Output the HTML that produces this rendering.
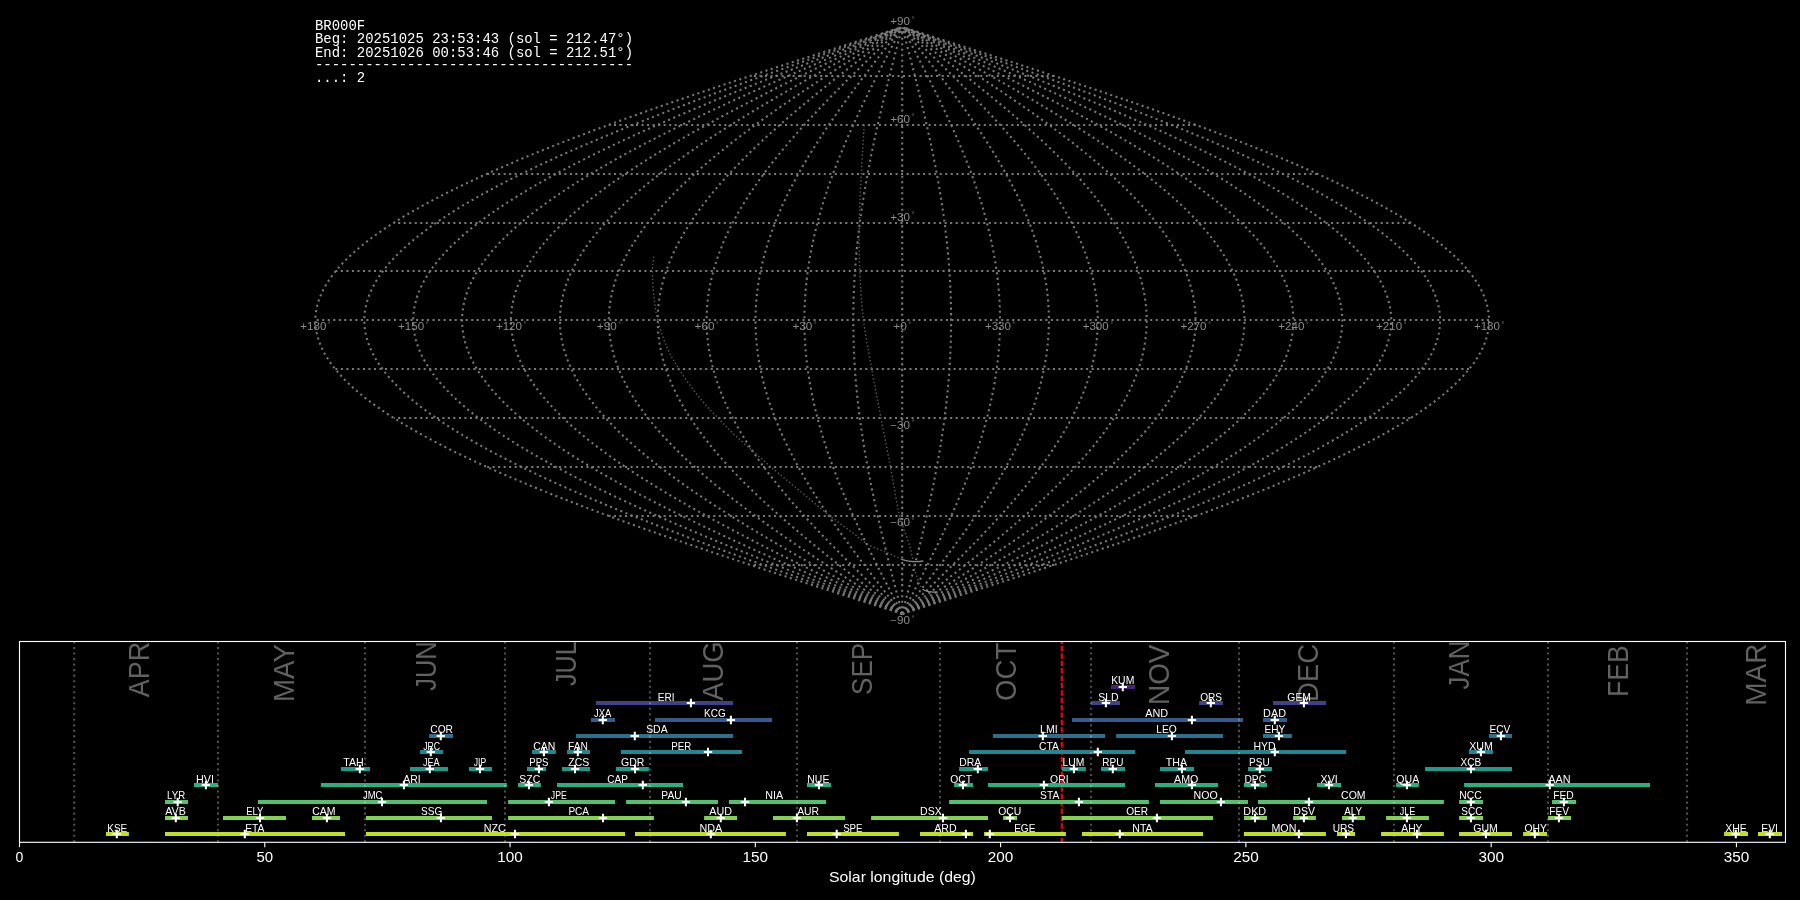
<!DOCTYPE html><html><head><meta charset="utf-8"><title>BR000F</title><style>html,body{margin:0;padding:0;background:#000;width:1800px;height:900px;overflow:hidden}svg{display:block;will-change:transform}</style></head><body>
<svg width="1800" height="900" viewBox="0 0 1800 900">
<rect width="1800" height="900" fill="#000"/>
<g fill="none" stroke="#787878" stroke-width="2.08" stroke-dasharray="2.08 3.44">
<polyline points="902.2,613.8 912.44,610.54 922.68,607.28 932.91,604.02 943.13,600.76 953.34,597.5 963.54,594.24 973.71,590.98 983.87,587.72 994,584.46 1004.1,581.2 1014.17,577.94 1024.2,574.68 1034.2,571.42 1044.16,568.16 1054.08,564.9 1063.94,561.64 1073.76,558.38 1083.53,555.12 1093.24,551.86 1102.9,548.6 1112.49,545.34 1122.02,542.08 1131.48,538.82 1140.87,535.56 1150.19,532.3 1159.44,529.04 1168.6,525.78 1177.69,522.52 1186.69,519.26 1195.6,516 1204.42,512.74 1213.16,509.48 1221.79,506.22 1230.33,502.96 1238.77,499.7 1247.11,496.44 1255.35,493.18 1263.47,489.92 1271.49,486.66 1279.39,483.4 1287.18,480.14 1294.85,476.88 1302.4,473.62 1309.83,470.36 1317.13,467.1 1324.31,463.84 1331.36,460.58 1338.28,457.32 1345.06,454.06 1351.71,450.8 1358.23,447.54 1364.6,444.28 1370.84,441.02 1376.93,437.76 1382.88,434.5 1388.68,431.24 1394.33,427.98 1399.83,424.72 1405.19,421.46 1410.38,418.2 1415.43,414.94 1420.31,411.68 1425.04,408.42 1429.61,405.16 1434.02,401.9 1438.27,398.64 1442.35,395.38 1446.27,392.12 1450.02,388.86 1453.61,385.6 1457.03,382.34 1460.28,379.08 1463.36,375.82 1466.27,372.56 1469.01,369.3 1471.57,366.04 1473.96,362.78 1476.18,359.52 1478.22,356.26 1480.09,353 1481.78,349.74 1483.29,346.48 1484.63,343.22 1485.79,339.96 1486.77,336.7 1487.57,333.44 1488.2,330.18 1488.64,326.92 1488.91,323.66 1489,320.4 1488.91,317.14 1488.64,313.88 1488.2,310.62 1487.57,307.36 1486.77,304.1 1485.79,300.84 1484.63,297.58 1483.29,294.32 1481.78,291.06 1480.09,287.8 1478.22,284.54 1476.18,281.28 1473.96,278.02 1471.57,274.76 1469.01,271.5 1466.27,268.24 1463.36,264.98 1460.28,261.72 1457.03,258.46 1453.61,255.2 1450.02,251.94 1446.27,248.68 1442.35,245.42 1438.27,242.16 1434.02,238.9 1429.61,235.64 1425.04,232.38 1420.31,229.12 1415.43,225.86 1410.38,222.6 1405.19,219.34 1399.83,216.08 1394.33,212.82 1388.68,209.56 1382.88,206.3 1376.93,203.04 1370.84,199.78 1364.6,196.52 1358.23,193.26 1351.71,190 1345.06,186.74 1338.28,183.48 1331.36,180.22 1324.31,176.96 1317.13,173.7 1309.83,170.44 1302.4,167.18 1294.85,163.92 1287.18,160.66 1279.39,157.4 1271.49,154.14 1263.47,150.88 1255.35,147.62 1247.11,144.36 1238.77,141.1 1230.33,137.84 1221.79,134.58 1213.16,131.32 1204.42,128.06 1195.6,124.8 1186.69,121.54 1177.69,118.28 1168.6,115.02 1159.44,111.76 1150.19,108.5 1140.87,105.24 1131.48,101.98 1122.02,98.72 1112.49,95.46 1102.9,92.2 1093.24,88.94 1083.53,85.68 1073.76,82.42 1063.94,79.16 1054.08,75.9 1044.16,72.64 1034.2,69.38 1024.2,66.12 1014.17,62.86 1004.1,59.6 994,56.34 983.87,53.08 973.71,49.82 963.54,46.56 953.34,43.3 943.13,40.04 932.91,36.78 922.68,33.52 912.44,30.26 904.25,27.65"/>
<polyline points="902.2,613.8 911.59,610.54 920.97,607.28 930.35,604.02 939.72,600.76 949.08,597.5 958.43,594.24 967.75,590.98 977.06,587.72 986.35,584.46 995.61,581.2 1004.84,577.94 1014.04,574.68 1023.2,571.42 1032.33,568.16 1041.42,564.9 1050.47,561.64 1059.47,558.38 1068.42,555.12 1077.32,551.86 1086.17,548.6 1094.97,545.34 1103.7,542.08 1112.37,538.82 1120.98,535.56 1129.53,532.3 1138,529.04 1146.4,525.78 1154.73,522.52 1162.98,519.26 1171.15,516 1179.24,512.74 1187.24,509.48 1195.16,506.22 1202.99,502.96 1210.73,499.7 1218.37,496.44 1225.92,493.18 1233.36,489.92 1240.71,486.66 1247.96,483.4 1255.09,480.14 1262.13,476.88 1269.05,473.62 1275.86,470.36 1282.55,467.1 1289.13,463.84 1295.6,460.58 1301.94,457.32 1308.16,454.06 1314.26,450.8 1320.23,447.54 1326.07,444.28 1331.79,441.02 1337.37,437.76 1342.82,434.5 1348.14,431.24 1353.32,427.98 1358.37,424.72 1363.27,421.46 1368.04,418.2 1372.66,414.94 1377.14,411.68 1381.47,408.42 1385.66,405.16 1389.7,401.9 1393.6,398.64 1397.34,395.38 1400.93,392.12 1404.37,388.86 1407.66,385.6 1410.79,382.34 1413.77,379.08 1416.6,375.82 1419.26,372.56 1421.77,369.3 1424.12,366.04 1426.31,362.78 1428.35,359.52 1430.22,356.26 1431.93,353 1433.48,349.74 1434.87,346.48 1436.09,343.22 1437.15,339.96 1438.05,336.7 1438.79,333.44 1439.36,330.18 1439.77,326.92 1440.02,323.66 1440.1,320.4 1440.02,317.14 1439.77,313.88 1439.36,310.62 1438.79,307.36 1438.05,304.1 1437.15,300.84 1436.09,297.58 1434.87,294.32 1433.48,291.06 1431.93,287.8 1430.22,284.54 1428.35,281.28 1426.31,278.02 1424.12,274.76 1421.77,271.5 1419.26,268.24 1416.6,264.98 1413.77,261.72 1410.79,258.46 1407.66,255.2 1404.37,251.94 1400.93,248.68 1397.34,245.42 1393.6,242.16 1389.7,238.9 1385.66,235.64 1381.47,232.38 1377.14,229.12 1372.66,225.86 1368.04,222.6 1363.27,219.34 1358.37,216.08 1353.32,212.82 1348.14,209.56 1342.82,206.3 1337.37,203.04 1331.79,199.78 1326.07,196.52 1320.23,193.26 1314.26,190 1308.16,186.74 1301.94,183.48 1295.6,180.22 1289.13,176.96 1282.55,173.7 1275.86,170.44 1269.05,167.18 1262.13,163.92 1255.09,160.66 1247.96,157.4 1240.71,154.14 1233.36,150.88 1225.92,147.62 1218.37,144.36 1210.73,141.1 1202.99,137.84 1195.16,134.58 1187.24,131.32 1179.24,128.06 1171.15,124.8 1162.98,121.54 1154.73,118.28 1146.4,115.02 1138,111.76 1129.53,108.5 1120.98,105.24 1112.37,101.98 1103.7,98.72 1094.97,95.46 1086.17,92.2 1077.32,88.94 1068.42,85.68 1059.47,82.42 1050.47,79.16 1041.42,75.9 1032.33,72.64 1023.2,69.38 1014.04,66.12 1004.84,62.86 995.61,59.6 986.35,56.34 977.06,53.08 967.75,49.82 958.43,46.56 949.08,43.3 939.72,40.04 930.35,36.78 920.97,33.52 911.59,30.26 904.08,27.65"/>
<polyline points="902.2,613.8 910.73,610.54 919.27,607.28 927.79,604.02 936.31,600.76 944.82,597.5 953.31,594.24 961.79,590.98 970.26,587.72 978.7,584.46 987.11,581.2 995.51,577.94 1003.87,574.68 1012.2,571.42 1020.5,568.16 1028.76,564.9 1036.99,561.64 1045.17,558.38 1053.31,555.12 1061.4,551.86 1069.45,548.6 1077.44,545.34 1085.38,542.08 1093.27,538.82 1101.09,535.56 1108.86,532.3 1116.56,529.04 1124.2,525.78 1131.77,522.52 1139.27,519.26 1146.7,516 1154.05,512.74 1161.33,509.48 1168.53,506.22 1175.65,502.96 1182.68,499.7 1189.63,496.44 1196.49,493.18 1203.26,489.92 1209.94,486.66 1216.52,483.4 1223.01,480.14 1229.4,476.88 1235.7,473.62 1241.89,470.36 1247.98,467.1 1253.96,463.84 1259.83,460.58 1265.6,457.32 1271.25,454.06 1276.8,450.8 1282.22,447.54 1287.54,444.28 1292.73,441.02 1297.81,437.76 1302.77,434.5 1307.6,431.24 1312.31,427.98 1316.9,424.72 1321.35,421.46 1325.69,418.2 1329.89,414.94 1333.96,411.68 1337.9,408.42 1341.71,405.16 1345.38,401.9 1348.92,398.64 1352.33,395.38 1355.59,392.12 1358.72,388.86 1361.71,385.6 1364.56,382.34 1367.27,379.08 1369.83,375.82 1372.26,372.56 1374.54,369.3 1376.67,366.04 1378.67,362.78 1380.51,359.52 1382.22,356.26 1383.77,353 1385.18,349.74 1386.44,346.48 1387.56,343.22 1388.52,339.96 1389.34,336.7 1390.01,333.44 1390.53,330.18 1390.9,326.92 1391.13,323.66 1391.2,320.4 1391.13,317.14 1390.9,313.88 1390.53,310.62 1390.01,307.36 1389.34,304.1 1388.52,300.84 1387.56,297.58 1386.44,294.32 1385.18,291.06 1383.77,287.8 1382.22,284.54 1380.51,281.28 1378.67,278.02 1376.67,274.76 1374.54,271.5 1372.26,268.24 1369.83,264.98 1367.27,261.72 1364.56,258.46 1361.71,255.2 1358.72,251.94 1355.59,248.68 1352.33,245.42 1348.92,242.16 1345.38,238.9 1341.71,235.64 1337.9,232.38 1333.96,229.12 1329.89,225.86 1325.69,222.6 1321.35,219.34 1316.9,216.08 1312.31,212.82 1307.6,209.56 1302.77,206.3 1297.81,203.04 1292.73,199.78 1287.54,196.52 1282.22,193.26 1276.8,190 1271.25,186.74 1265.6,183.48 1259.83,180.22 1253.96,176.96 1247.98,173.7 1241.89,170.44 1235.7,167.18 1229.4,163.92 1223.01,160.66 1216.52,157.4 1209.94,154.14 1203.26,150.88 1196.49,147.62 1189.63,144.36 1182.68,141.1 1175.65,137.84 1168.53,134.58 1161.33,131.32 1154.05,128.06 1146.7,124.8 1139.27,121.54 1131.77,118.28 1124.2,115.02 1116.56,111.76 1108.86,108.5 1101.09,105.24 1093.27,101.98 1085.38,98.72 1077.44,95.46 1069.45,92.2 1061.4,88.94 1053.31,85.68 1045.17,82.42 1036.99,79.16 1028.76,75.9 1020.5,72.64 1012.2,69.38 1003.87,66.12 995.51,62.86 987.11,59.6 978.7,56.34 970.26,53.08 961.79,49.82 953.31,46.56 944.82,43.3 936.31,40.04 927.79,36.78 919.27,33.52 910.73,30.26 903.91,27.65"/>
<polyline points="902.2,613.8 909.88,610.54 917.56,607.28 925.23,604.02 932.9,600.76 940.56,597.5 948.2,594.24 955.83,590.98 963.45,587.72 971.05,584.46 978.62,581.2 986.18,577.94 993.7,574.68 1001.2,571.42 1008.67,568.16 1016.11,564.9 1023.51,561.64 1030.87,558.38 1038.2,555.12 1045.48,551.86 1052.72,548.6 1059.92,545.34 1067.06,542.08 1074.16,538.82 1081.2,535.56 1088.19,532.3 1095.13,529.04 1102,525.78 1108.81,522.52 1115.56,519.26 1122.25,516 1128.87,512.74 1135.42,509.48 1141.9,506.22 1148.3,502.96 1154.63,499.7 1160.88,496.44 1167.06,493.18 1173.15,489.92 1179.16,486.66 1185.09,483.4 1190.93,480.14 1196.68,476.88 1202.35,473.62 1207.92,470.36 1213.4,467.1 1218.78,463.84 1224.07,460.58 1229.26,457.32 1234.35,454.06 1239.34,450.8 1244.22,447.54 1249,444.28 1253.68,441.02 1258.25,437.76 1262.71,434.5 1267.06,431.24 1271.3,427.98 1275.43,424.72 1279.44,421.46 1283.34,418.2 1287.12,414.94 1290.79,411.68 1294.33,408.42 1297.76,405.16 1301.07,401.9 1304.25,398.64 1307.31,395.38 1310.25,392.12 1313.07,388.86 1315.76,385.6 1318.32,382.34 1320.76,379.08 1323.07,375.82 1325.25,372.56 1327.3,369.3 1329.23,366.04 1331.02,362.78 1332.68,359.52 1334.21,356.26 1335.61,353 1336.88,349.74 1338.02,346.48 1339.02,343.22 1339.89,339.96 1340.63,336.7 1341.23,333.44 1341.7,330.18 1342.03,326.92 1342.23,323.66 1342.3,320.4 1342.23,317.14 1342.03,313.88 1341.7,310.62 1341.23,307.36 1340.63,304.1 1339.89,300.84 1339.02,297.58 1338.02,294.32 1336.88,291.06 1335.61,287.8 1334.21,284.54 1332.68,281.28 1331.02,278.02 1329.23,274.76 1327.3,271.5 1325.25,268.24 1323.07,264.98 1320.76,261.72 1318.32,258.46 1315.76,255.2 1313.07,251.94 1310.25,248.68 1307.31,245.42 1304.25,242.16 1301.07,238.9 1297.76,235.64 1294.33,232.38 1290.79,229.12 1287.12,225.86 1283.34,222.6 1279.44,219.34 1275.43,216.08 1271.3,212.82 1267.06,209.56 1262.71,206.3 1258.25,203.04 1253.68,199.78 1249,196.52 1244.22,193.26 1239.34,190 1234.35,186.74 1229.26,183.48 1224.07,180.22 1218.78,176.96 1213.4,173.7 1207.92,170.44 1202.35,167.18 1196.68,163.92 1190.93,160.66 1185.09,157.4 1179.16,154.14 1173.15,150.88 1167.06,147.62 1160.88,144.36 1154.63,141.1 1148.3,137.84 1141.9,134.58 1135.42,131.32 1128.87,128.06 1122.25,124.8 1115.56,121.54 1108.81,118.28 1102,115.02 1095.13,111.76 1088.19,108.5 1081.2,105.24 1074.16,101.98 1067.06,98.72 1059.92,95.46 1052.72,92.2 1045.48,88.94 1038.2,85.68 1030.87,82.42 1023.51,79.16 1016.11,75.9 1008.67,72.64 1001.2,69.38 993.7,66.12 986.18,62.86 978.62,59.6 971.05,56.34 963.45,53.08 955.83,49.82 948.2,46.56 940.56,43.3 932.9,40.04 925.23,36.78 917.56,33.52 909.88,30.26 903.74,27.65"/>
<polyline points="902.2,613.8 909.03,610.54 915.85,607.28 922.67,604.02 929.49,600.76 936.3,597.5 943.09,594.24 949.88,590.98 956.64,587.72 963.4,584.46 970.13,581.2 976.84,577.94 983.54,574.68 990.2,571.42 996.84,568.16 1003.45,564.9 1010.03,561.64 1016.58,558.38 1023.09,555.12 1029.56,551.86 1036,548.6 1042.39,545.34 1048.75,542.08 1055.05,538.82 1061.32,535.56 1067.53,532.3 1073.69,529.04 1079.8,525.78 1085.86,522.52 1091.86,519.26 1097.8,516 1103.68,512.74 1109.5,509.48 1115.26,506.22 1120.96,502.96 1126.58,499.7 1132.14,496.44 1137.63,493.18 1143.05,489.92 1148.39,486.66 1153.66,483.4 1158.85,480.14 1163.96,476.88 1169,473.62 1173.95,470.36 1178.82,467.1 1183.61,463.84 1188.31,460.58 1192.92,457.32 1197.44,454.06 1201.88,450.8 1206.22,447.54 1210.47,444.28 1214.63,441.02 1218.69,437.76 1222.65,434.5 1226.52,431.24 1230.29,427.98 1233.96,424.72 1237.52,421.46 1240.99,418.2 1244.35,414.94 1247.61,411.68 1250.76,408.42 1253.81,405.16 1256.75,401.9 1259.58,398.64 1262.3,395.38 1264.91,392.12 1267.42,388.86 1269.81,385.6 1272.09,382.34 1274.25,379.08 1276.31,375.82 1278.25,372.56 1280.07,369.3 1281.78,366.04 1283.37,362.78 1284.85,359.52 1286.21,356.26 1287.46,353 1288.58,349.74 1289.59,346.48 1290.48,343.22 1291.26,339.96 1291.91,336.7 1292.45,333.44 1292.86,330.18 1293.16,326.92 1293.34,323.66 1293.4,320.4 1293.34,317.14 1293.16,313.88 1292.86,310.62 1292.45,307.36 1291.91,304.1 1291.26,300.84 1290.48,297.58 1289.59,294.32 1288.58,291.06 1287.46,287.8 1286.21,284.54 1284.85,281.28 1283.37,278.02 1281.78,274.76 1280.07,271.5 1278.25,268.24 1276.31,264.98 1274.25,261.72 1272.09,258.46 1269.81,255.2 1267.42,251.94 1264.91,248.68 1262.3,245.42 1259.58,242.16 1256.75,238.9 1253.81,235.64 1250.76,232.38 1247.61,229.12 1244.35,225.86 1240.99,222.6 1237.52,219.34 1233.96,216.08 1230.29,212.82 1226.52,209.56 1222.65,206.3 1218.69,203.04 1214.63,199.78 1210.47,196.52 1206.22,193.26 1201.88,190 1197.44,186.74 1192.92,183.48 1188.31,180.22 1183.61,176.96 1178.82,173.7 1173.95,170.44 1169,167.18 1163.96,163.92 1158.85,160.66 1153.66,157.4 1148.39,154.14 1143.05,150.88 1137.63,147.62 1132.14,144.36 1126.58,141.1 1120.96,137.84 1115.26,134.58 1109.5,131.32 1103.68,128.06 1097.8,124.8 1091.86,121.54 1085.86,118.28 1079.8,115.02 1073.69,111.76 1067.53,108.5 1061.32,105.24 1055.05,101.98 1048.75,98.72 1042.39,95.46 1036,92.2 1029.56,88.94 1023.09,85.68 1016.58,82.42 1010.03,79.16 1003.45,75.9 996.84,72.64 990.2,69.38 983.54,66.12 976.84,62.86 970.13,59.6 963.4,56.34 956.64,53.08 949.88,49.82 943.09,46.56 936.3,43.3 929.49,40.04 922.67,36.78 915.85,33.52 909.03,30.26 903.57,27.65"/>
<polyline points="902.2,613.8 908.17,610.54 914.15,607.28 920.11,604.02 926.08,600.76 932.03,597.5 937.98,594.24 943.92,590.98 949.84,587.72 955.75,584.46 961.64,581.2 967.51,577.94 973.37,574.68 979.2,571.42 985.01,568.16 990.79,564.9 996.55,561.64 1002.28,558.38 1007.98,555.12 1013.64,551.86 1019.27,548.6 1024.87,545.34 1030.43,542.08 1035.95,538.82 1041.43,535.56 1046.86,532.3 1052.25,529.04 1057.6,525.78 1062.9,522.52 1068.15,519.26 1073.35,516 1078.5,512.74 1083.59,509.48 1088.63,506.22 1093.61,502.96 1098.54,499.7 1103.4,496.44 1108.2,493.18 1112.94,489.92 1117.62,486.66 1122.23,483.4 1126.77,480.14 1131.24,476.88 1135.65,473.62 1139.98,470.36 1144.24,467.1 1148.43,463.84 1152.54,460.58 1156.58,457.32 1160.54,454.06 1164.42,450.8 1168.22,447.54 1171.94,444.28 1175.57,441.02 1179.13,437.76 1182.6,434.5 1185.98,431.24 1189.28,427.98 1192.49,424.72 1195.61,421.46 1198.64,418.2 1201.58,414.94 1204.43,411.68 1207.19,408.42 1209.86,405.16 1212.43,401.9 1214.91,398.64 1217.29,395.38 1219.58,392.12 1221.76,388.86 1223.86,385.6 1225.85,382.34 1227.75,379.08 1229.54,375.82 1231.24,372.56 1232.84,369.3 1234.33,366.04 1235.73,362.78 1237.02,359.52 1238.21,356.26 1239.3,353 1240.29,349.74 1241.17,346.48 1241.95,343.22 1242.62,339.96 1243.2,336.7 1243.67,333.44 1244.03,330.18 1244.29,326.92 1244.45,323.66 1244.5,320.4 1244.45,317.14 1244.29,313.88 1244.03,310.62 1243.67,307.36 1243.2,304.1 1242.62,300.84 1241.95,297.58 1241.17,294.32 1240.29,291.06 1239.3,287.8 1238.21,284.54 1237.02,281.28 1235.73,278.02 1234.33,274.76 1232.84,271.5 1231.24,268.24 1229.54,264.98 1227.75,261.72 1225.85,258.46 1223.86,255.2 1221.76,251.94 1219.58,248.68 1217.29,245.42 1214.91,242.16 1212.43,238.9 1209.86,235.64 1207.19,232.38 1204.43,229.12 1201.58,225.86 1198.64,222.6 1195.61,219.34 1192.49,216.08 1189.28,212.82 1185.98,209.56 1182.6,206.3 1179.13,203.04 1175.57,199.78 1171.94,196.52 1168.22,193.26 1164.42,190 1160.54,186.74 1156.58,183.48 1152.54,180.22 1148.43,176.96 1144.24,173.7 1139.98,170.44 1135.65,167.18 1131.24,163.92 1126.77,160.66 1122.23,157.4 1117.62,154.14 1112.94,150.88 1108.2,147.62 1103.4,144.36 1098.54,141.1 1093.61,137.84 1088.63,134.58 1083.59,131.32 1078.5,128.06 1073.35,124.8 1068.15,121.54 1062.9,118.28 1057.6,115.02 1052.25,111.76 1046.86,108.5 1041.43,105.24 1035.95,101.98 1030.43,98.72 1024.87,95.46 1019.27,92.2 1013.64,88.94 1007.98,85.68 1002.28,82.42 996.55,79.16 990.79,75.9 985.01,72.64 979.2,69.38 973.37,66.12 967.51,62.86 961.64,59.6 955.75,56.34 949.84,53.08 943.92,49.82 937.98,46.56 932.03,43.3 926.08,40.04 920.11,36.78 914.15,33.52 908.17,30.26 903.39,27.65"/>
<polyline points="902.2,613.8 907.32,610.54 912.44,607.28 917.56,604.02 922.67,600.76 927.77,597.5 932.87,594.24 937.96,590.98 943.03,587.72 948.1,584.46 953.15,581.2 958.18,577.94 963.2,574.68 968.2,571.42 973.18,568.16 978.14,564.9 983.07,561.64 987.98,558.38 992.87,555.12 997.72,551.86 1002.55,548.6 1007.35,545.34 1012.11,542.08 1016.84,538.82 1021.54,535.56 1026.2,532.3 1030.82,529.04 1035.4,525.78 1039.94,522.52 1044.44,519.26 1048.9,516 1053.31,512.74 1057.68,509.48 1062,506.22 1066.27,502.96 1070.49,499.7 1074.66,496.44 1078.77,493.18 1082.84,489.92 1086.84,486.66 1090.79,483.4 1094.69,480.14 1098.52,476.88 1102.3,473.62 1106.01,470.36 1109.67,467.1 1113.25,463.84 1116.78,460.58 1120.24,457.32 1123.63,454.06 1126.96,450.8 1130.21,447.54 1133.4,444.28 1136.52,441.02 1139.57,437.76 1142.54,434.5 1145.44,431.24 1148.27,427.98 1151.02,424.72 1153.69,421.46 1156.29,418.2 1158.81,414.94 1161.26,411.68 1163.62,408.42 1165.91,405.16 1168.11,401.9 1170.23,398.64 1172.28,395.38 1174.24,392.12 1176.11,388.86 1177.91,385.6 1179.62,382.34 1181.24,379.08 1182.78,375.82 1184.23,372.56 1185.6,369.3 1186.88,366.04 1188.08,362.78 1189.19,359.52 1190.21,356.26 1191.14,353 1191.99,349.74 1192.74,346.48 1193.41,343.22 1193.99,339.96 1194.48,336.7 1194.89,333.44 1195.2,330.18 1195.42,326.92 1195.56,323.66 1195.6,320.4 1195.56,317.14 1195.42,313.88 1195.2,310.62 1194.89,307.36 1194.48,304.1 1193.99,300.84 1193.41,297.58 1192.74,294.32 1191.99,291.06 1191.14,287.8 1190.21,284.54 1189.19,281.28 1188.08,278.02 1186.88,274.76 1185.6,271.5 1184.23,268.24 1182.78,264.98 1181.24,261.72 1179.62,258.46 1177.91,255.2 1176.11,251.94 1174.24,248.68 1172.28,245.42 1170.23,242.16 1168.11,238.9 1165.91,235.64 1163.62,232.38 1161.26,229.12 1158.81,225.86 1156.29,222.6 1153.69,219.34 1151.02,216.08 1148.27,212.82 1145.44,209.56 1142.54,206.3 1139.57,203.04 1136.52,199.78 1133.4,196.52 1130.21,193.26 1126.96,190 1123.63,186.74 1120.24,183.48 1116.78,180.22 1113.25,176.96 1109.67,173.7 1106.01,170.44 1102.3,167.18 1098.52,163.92 1094.69,160.66 1090.79,157.4 1086.84,154.14 1082.84,150.88 1078.77,147.62 1074.66,144.36 1070.49,141.1 1066.27,137.84 1062,134.58 1057.68,131.32 1053.31,128.06 1048.9,124.8 1044.44,121.54 1039.94,118.28 1035.4,115.02 1030.82,111.76 1026.2,108.5 1021.54,105.24 1016.84,101.98 1012.11,98.72 1007.35,95.46 1002.55,92.2 997.72,88.94 992.87,85.68 987.98,82.42 983.07,79.16 978.14,75.9 973.18,72.64 968.2,69.38 963.2,66.12 958.18,62.86 953.15,59.6 948.1,56.34 943.03,53.08 937.96,49.82 932.87,46.56 927.77,43.3 922.67,40.04 917.56,36.78 912.44,33.52 907.32,30.26 903.22,27.65"/>
<polyline points="902.2,613.8 906.47,610.54 910.73,607.28 915,604.02 919.26,600.76 923.51,597.5 927.76,594.24 932,590.98 936.23,587.72 940.45,584.46 944.66,581.2 948.85,577.94 953.03,574.68 957.2,571.42 961.35,568.16 965.48,564.9 969.59,561.64 973.68,558.38 977.75,555.12 981.8,551.86 985.82,548.6 989.82,545.34 993.79,542.08 997.73,538.82 1001.65,535.56 1005.53,532.3 1009.38,529.04 1013.2,525.78 1016.99,522.52 1020.74,519.26 1024.45,516 1028.13,512.74 1031.77,509.48 1035.36,506.22 1038.92,502.96 1042.44,499.7 1045.91,496.44 1049.34,493.18 1052.73,489.92 1056.07,486.66 1059.36,483.4 1062.61,480.14 1065.8,476.88 1068.95,473.62 1072.04,470.36 1075.09,467.1 1078.08,463.84 1081.02,460.58 1083.9,457.32 1086.73,454.06 1089.5,450.8 1092.21,447.54 1094.87,444.28 1097.47,441.02 1100,437.76 1102.48,434.5 1104.9,431.24 1107.25,427.98 1109.55,424.72 1111.78,421.46 1113.94,418.2 1116.04,414.94 1118.08,411.68 1120.05,408.42 1121.96,405.16 1123.79,401.9 1125.56,398.64 1127.26,395.38 1128.9,392.12 1130.46,388.86 1131.95,385.6 1133.38,382.34 1134.73,379.08 1136.02,375.82 1137.23,372.56 1138.37,369.3 1139.44,366.04 1140.43,362.78 1141.36,359.52 1142.21,356.26 1142.99,353 1143.69,349.74 1144.32,346.48 1144.88,343.22 1145.36,339.96 1145.77,336.7 1146.1,333.44 1146.36,330.18 1146.55,326.92 1146.66,323.66 1146.7,320.4 1146.66,317.14 1146.55,313.88 1146.36,310.62 1146.1,307.36 1145.77,304.1 1145.36,300.84 1144.88,297.58 1144.32,294.32 1143.69,291.06 1142.99,287.8 1142.21,284.54 1141.36,281.28 1140.43,278.02 1139.44,274.76 1138.37,271.5 1137.23,268.24 1136.02,264.98 1134.73,261.72 1133.38,258.46 1131.95,255.2 1130.46,251.94 1128.9,248.68 1127.26,245.42 1125.56,242.16 1123.79,238.9 1121.96,235.64 1120.05,232.38 1118.08,229.12 1116.04,225.86 1113.94,222.6 1111.78,219.34 1109.55,216.08 1107.25,212.82 1104.9,209.56 1102.48,206.3 1100,203.04 1097.47,199.78 1094.87,196.52 1092.21,193.26 1089.5,190 1086.73,186.74 1083.9,183.48 1081.02,180.22 1078.08,176.96 1075.09,173.7 1072.04,170.44 1068.95,167.18 1065.8,163.92 1062.61,160.66 1059.36,157.4 1056.07,154.14 1052.73,150.88 1049.34,147.62 1045.91,144.36 1042.44,141.1 1038.92,137.84 1035.36,134.58 1031.77,131.32 1028.13,128.06 1024.45,124.8 1020.74,121.54 1016.99,118.28 1013.2,115.02 1009.38,111.76 1005.53,108.5 1001.65,105.24 997.73,101.98 993.79,98.72 989.82,95.46 985.82,92.2 981.8,88.94 977.75,85.68 973.68,82.42 969.59,79.16 965.48,75.9 961.35,72.64 957.2,69.38 953.03,66.12 948.85,62.86 944.66,59.6 940.45,56.34 936.23,53.08 932,49.82 927.76,46.56 923.51,43.3 919.26,40.04 915,36.78 910.73,33.52 906.47,30.26 903.05,27.65"/>
<polyline points="902.2,613.8 905.61,610.54 909.03,607.28 912.44,604.02 915.84,600.76 919.25,597.5 922.65,594.24 926.04,590.98 929.42,587.72 932.8,584.46 936.17,581.2 939.52,577.94 942.87,574.68 946.2,571.42 949.52,568.16 952.83,564.9 956.11,561.64 959.39,558.38 962.64,555.12 965.88,551.86 969.1,548.6 972.3,545.34 975.47,542.08 978.63,538.82 981.76,535.56 984.86,532.3 987.95,529.04 991,525.78 994.03,522.52 997.03,519.26 1000,516 1002.94,512.74 1005.85,509.48 1008.73,506.22 1011.58,502.96 1014.39,499.7 1017.17,496.44 1019.92,493.18 1022.62,489.92 1025.3,486.66 1027.93,483.4 1030.53,480.14 1033.08,476.88 1035.6,473.62 1038.08,470.36 1040.51,467.1 1042.9,463.84 1045.25,460.58 1047.56,457.32 1049.82,454.06 1052.04,450.8 1054.21,447.54 1056.33,444.28 1058.41,441.02 1060.44,437.76 1062.43,434.5 1064.36,431.24 1066.24,427.98 1068.08,424.72 1069.86,421.46 1071.59,418.2 1073.28,414.94 1074.9,411.68 1076.48,408.42 1078,405.16 1079.47,401.9 1080.89,398.64 1082.25,395.38 1083.56,392.12 1084.81,388.86 1086,385.6 1087.14,382.34 1088.23,379.08 1089.25,375.82 1090.22,372.56 1091.14,369.3 1091.99,366.04 1092.79,362.78 1093.53,359.52 1094.21,356.26 1094.83,353 1095.39,349.74 1095.9,346.48 1096.34,343.22 1096.73,339.96 1097.06,336.7 1097.32,333.44 1097.53,330.18 1097.68,326.92 1097.77,323.66 1097.8,320.4 1097.77,317.14 1097.68,313.88 1097.53,310.62 1097.32,307.36 1097.06,304.1 1096.73,300.84 1096.34,297.58 1095.9,294.32 1095.39,291.06 1094.83,287.8 1094.21,284.54 1093.53,281.28 1092.79,278.02 1091.99,274.76 1091.14,271.5 1090.22,268.24 1089.25,264.98 1088.23,261.72 1087.14,258.46 1086,255.2 1084.81,251.94 1083.56,248.68 1082.25,245.42 1080.89,242.16 1079.47,238.9 1078,235.64 1076.48,232.38 1074.9,229.12 1073.28,225.86 1071.59,222.6 1069.86,219.34 1068.08,216.08 1066.24,212.82 1064.36,209.56 1062.43,206.3 1060.44,203.04 1058.41,199.78 1056.33,196.52 1054.21,193.26 1052.04,190 1049.82,186.74 1047.56,183.48 1045.25,180.22 1042.9,176.96 1040.51,173.7 1038.08,170.44 1035.6,167.18 1033.08,163.92 1030.53,160.66 1027.93,157.4 1025.3,154.14 1022.62,150.88 1019.92,147.62 1017.17,144.36 1014.39,141.1 1011.58,137.84 1008.73,134.58 1005.85,131.32 1002.94,128.06 1000,124.8 997.03,121.54 994.03,118.28 991,115.02 987.95,111.76 984.86,108.5 981.76,105.24 978.63,101.98 975.47,98.72 972.3,95.46 969.1,92.2 965.88,88.94 962.64,85.68 959.39,82.42 956.11,79.16 952.83,75.9 949.52,72.64 946.2,69.38 942.87,66.12 939.52,62.86 936.17,59.6 932.8,56.34 929.42,53.08 926.04,49.82 922.65,46.56 919.25,43.3 915.84,40.04 912.44,36.78 909.03,33.52 905.61,30.26 902.88,27.65"/>
<polyline points="902.2,613.8 904.76,610.54 907.32,607.28 909.88,604.02 912.43,600.76 914.99,597.5 917.53,594.24 920.08,590.98 922.62,587.72 925.15,584.46 927.67,581.2 930.19,577.94 932.7,574.68 935.2,571.42 937.69,568.16 940.17,564.9 942.64,561.64 945.09,558.38 947.53,555.12 949.96,551.86 952.37,548.6 954.77,545.34 957.15,542.08 959.52,538.82 961.87,535.56 964.2,532.3 966.51,529.04 968.8,525.78 971.07,522.52 973.32,519.26 975.55,516 977.76,512.74 979.94,509.48 982.1,506.22 984.23,502.96 986.34,499.7 988.43,496.44 990.49,493.18 992.52,489.92 994.52,486.66 996.5,483.4 998.44,480.14 1000.36,476.88 1002.25,473.62 1004.11,470.36 1005.93,467.1 1007.73,463.84 1009.49,460.58 1011.22,457.32 1012.92,454.06 1014.58,450.8 1016.21,447.54 1017.8,444.28 1019.36,441.02 1020.88,437.76 1022.37,434.5 1023.82,431.24 1025.23,427.98 1026.61,424.72 1027.95,421.46 1029.25,418.2 1030.51,414.94 1031.73,411.68 1032.91,408.42 1034.05,405.16 1035.16,401.9 1036.22,398.64 1037.24,395.38 1038.22,392.12 1039.16,388.86 1040.05,385.6 1040.91,382.34 1041.72,379.08 1042.49,375.82 1043.22,372.56 1043.9,369.3 1044.54,366.04 1045.14,362.78 1045.69,359.52 1046.2,356.26 1046.67,353 1047.09,349.74 1047.47,346.48 1047.81,343.22 1048.1,339.96 1048.34,336.7 1048.54,333.44 1048.7,330.18 1048.81,326.92 1048.88,323.66 1048.9,320.4 1048.88,317.14 1048.81,313.88 1048.7,310.62 1048.54,307.36 1048.34,304.1 1048.1,300.84 1047.81,297.58 1047.47,294.32 1047.09,291.06 1046.67,287.8 1046.2,284.54 1045.69,281.28 1045.14,278.02 1044.54,274.76 1043.9,271.5 1043.22,268.24 1042.49,264.98 1041.72,261.72 1040.91,258.46 1040.05,255.2 1039.16,251.94 1038.22,248.68 1037.24,245.42 1036.22,242.16 1035.16,238.9 1034.05,235.64 1032.91,232.38 1031.73,229.12 1030.51,225.86 1029.25,222.6 1027.95,219.34 1026.61,216.08 1025.23,212.82 1023.82,209.56 1022.37,206.3 1020.88,203.04 1019.36,199.78 1017.8,196.52 1016.21,193.26 1014.58,190 1012.92,186.74 1011.22,183.48 1009.49,180.22 1007.73,176.96 1005.93,173.7 1004.11,170.44 1002.25,167.18 1000.36,163.92 998.44,160.66 996.5,157.4 994.52,154.14 992.52,150.88 990.49,147.62 988.43,144.36 986.34,141.1 984.23,137.84 982.1,134.58 979.94,131.32 977.76,128.06 975.55,124.8 973.32,121.54 971.07,118.28 968.8,115.02 966.51,111.76 964.2,108.5 961.87,105.24 959.52,101.98 957.15,98.72 954.77,95.46 952.37,92.2 949.96,88.94 947.53,85.68 945.09,82.42 942.64,79.16 940.17,75.9 937.69,72.64 935.2,69.38 932.7,66.12 930.19,62.86 927.67,59.6 925.15,56.34 922.62,53.08 920.08,49.82 917.53,46.56 914.99,43.3 912.43,40.04 909.88,36.78 907.32,33.52 904.76,30.26 902.71,27.65"/>
<polyline points="902.2,613.8 903.91,610.54 905.61,607.28 907.32,604.02 909.02,600.76 910.72,597.5 912.42,594.24 914.12,590.98 915.81,587.72 917.5,584.46 919.18,581.2 920.86,577.94 922.53,574.68 924.2,571.42 925.86,568.16 927.51,564.9 929.16,561.64 930.79,558.38 932.42,555.12 934.04,551.86 935.65,548.6 937.25,545.34 938.84,542.08 940.41,538.82 941.98,535.56 943.53,532.3 945.07,529.04 946.6,525.78 948.11,522.52 949.61,519.26 951.1,516 952.57,512.74 954.03,509.48 955.47,506.22 956.89,502.96 958.3,499.7 959.69,496.44 961.06,493.18 962.41,489.92 963.75,486.66 965.06,483.4 966.36,480.14 967.64,476.88 968.9,473.62 970.14,470.36 971.36,467.1 972.55,463.84 973.73,460.58 974.88,457.32 976.01,454.06 977.12,450.8 978.2,447.54 979.27,444.28 980.31,441.02 981.32,437.76 982.31,434.5 983.28,431.24 984.22,427.98 985.14,424.72 986.03,421.46 986.9,418.2 987.74,414.94 988.55,411.68 989.34,408.42 990.1,405.16 990.84,401.9 991.54,398.64 992.23,395.38 992.88,392.12 993.5,388.86 994.1,385.6 994.67,382.34 995.21,379.08 995.73,375.82 996.21,372.56 996.67,369.3 997.09,366.04 997.49,362.78 997.86,359.52 998.2,356.26 998.51,353 998.8,349.74 999.05,346.48 999.27,343.22 999.46,339.96 999.63,336.7 999.76,333.44 999.87,330.18 999.94,326.92 999.99,323.66 1000,320.4 999.99,317.14 999.94,313.88 999.87,310.62 999.76,307.36 999.63,304.1 999.46,300.84 999.27,297.58 999.05,294.32 998.8,291.06 998.51,287.8 998.2,284.54 997.86,281.28 997.49,278.02 997.09,274.76 996.67,271.5 996.21,268.24 995.73,264.98 995.21,261.72 994.67,258.46 994.1,255.2 993.5,251.94 992.88,248.68 992.23,245.42 991.54,242.16 990.84,238.9 990.1,235.64 989.34,232.38 988.55,229.12 987.74,225.86 986.9,222.6 986.03,219.34 985.14,216.08 984.22,212.82 983.28,209.56 982.31,206.3 981.32,203.04 980.31,199.78 979.27,196.52 978.2,193.26 977.12,190 976.01,186.74 974.88,183.48 973.73,180.22 972.55,176.96 971.36,173.7 970.14,170.44 968.9,167.18 967.64,163.92 966.36,160.66 965.06,157.4 963.75,154.14 962.41,150.88 961.06,147.62 959.69,144.36 958.3,141.1 956.89,137.84 955.47,134.58 954.03,131.32 952.57,128.06 951.1,124.8 949.61,121.54 948.11,118.28 946.6,115.02 945.07,111.76 943.53,108.5 941.98,105.24 940.41,101.98 938.84,98.72 937.25,95.46 935.65,92.2 934.04,88.94 932.42,85.68 930.79,82.42 929.16,79.16 927.51,75.9 925.86,72.64 924.2,69.38 922.53,66.12 920.86,62.86 919.18,59.6 917.5,56.34 915.81,53.08 914.12,49.82 912.42,46.56 910.72,43.3 909.02,40.04 907.32,36.78 905.61,33.52 903.91,30.26 902.54,27.65"/>
<polyline points="902.2,613.8 903.05,610.54 903.91,607.28 904.76,604.02 905.61,600.76 906.46,597.5 907.31,594.24 908.16,590.98 909.01,587.72 909.85,584.46 910.69,581.2 911.53,577.94 912.37,574.68 913.2,571.42 914.03,568.16 914.86,564.9 915.68,561.64 916.5,558.38 917.31,555.12 918.12,551.86 918.92,548.6 919.72,545.34 920.52,542.08 921.31,538.82 922.09,535.56 922.87,532.3 923.64,529.04 924.4,525.78 925.16,522.52 925.91,519.26 926.65,516 927.39,512.74 928.11,509.48 928.83,506.22 929.54,502.96 930.25,499.7 930.94,496.44 931.63,493.18 932.31,489.92 932.97,486.66 933.63,483.4 934.28,480.14 934.92,476.88 935.55,473.62 936.17,470.36 936.78,467.1 937.38,463.84 937.96,460.58 938.54,457.32 939.11,454.06 939.66,450.8 940.2,447.54 940.73,444.28 941.25,441.02 941.76,437.76 942.26,434.5 942.74,431.24 943.21,427.98 943.67,424.72 944.12,421.46 944.55,418.2 944.97,414.94 945.38,411.68 945.77,408.42 946.15,405.16 946.52,401.9 946.87,398.64 947.21,395.38 947.54,392.12 947.85,388.86 948.15,385.6 948.44,382.34 948.71,379.08 948.96,375.82 949.21,372.56 949.43,369.3 949.65,366.04 949.85,362.78 950.03,359.52 950.2,356.26 950.36,353 950.5,349.74 950.62,346.48 950.74,343.22 950.83,339.96 950.91,336.7 950.98,333.44 951.03,330.18 951.07,326.92 951.09,323.66 951.1,320.4 951.09,317.14 951.07,313.88 951.03,310.62 950.98,307.36 950.91,304.1 950.83,300.84 950.74,297.58 950.62,294.32 950.5,291.06 950.36,287.8 950.2,284.54 950.03,281.28 949.85,278.02 949.65,274.76 949.43,271.5 949.21,268.24 948.96,264.98 948.71,261.72 948.44,258.46 948.15,255.2 947.85,251.94 947.54,248.68 947.21,245.42 946.87,242.16 946.52,238.9 946.15,235.64 945.77,232.38 945.38,229.12 944.97,225.86 944.55,222.6 944.12,219.34 943.67,216.08 943.21,212.82 942.74,209.56 942.26,206.3 941.76,203.04 941.25,199.78 940.73,196.52 940.2,193.26 939.66,190 939.11,186.74 938.54,183.48 937.96,180.22 937.38,176.96 936.78,173.7 936.17,170.44 935.55,167.18 934.92,163.92 934.28,160.66 933.63,157.4 932.97,154.14 932.31,150.88 931.63,147.62 930.94,144.36 930.25,141.1 929.54,137.84 928.83,134.58 928.11,131.32 927.39,128.06 926.65,124.8 925.91,121.54 925.16,118.28 924.4,115.02 923.64,111.76 922.87,108.5 922.09,105.24 921.31,101.98 920.52,98.72 919.72,95.46 918.92,92.2 918.12,88.94 917.31,85.68 916.5,82.42 915.68,79.16 914.86,75.9 914.03,72.64 913.2,69.38 912.37,66.12 911.53,62.86 910.69,59.6 909.85,56.34 909.01,53.08 908.16,49.82 907.31,46.56 906.46,43.3 905.61,40.04 904.76,36.78 903.91,33.52 903.05,30.26 902.37,27.65"/>
<polyline points="902.2,613.8 902.2,610.54 902.2,607.28 902.2,604.02 902.2,600.76 902.2,597.5 902.2,594.24 902.2,590.98 902.2,587.72 902.2,584.46 902.2,581.2 902.2,577.94 902.2,574.68 902.2,571.42 902.2,568.16 902.2,564.9 902.2,561.64 902.2,558.38 902.2,555.12 902.2,551.86 902.2,548.6 902.2,545.34 902.2,542.08 902.2,538.82 902.2,535.56 902.2,532.3 902.2,529.04 902.2,525.78 902.2,522.52 902.2,519.26 902.2,516 902.2,512.74 902.2,509.48 902.2,506.22 902.2,502.96 902.2,499.7 902.2,496.44 902.2,493.18 902.2,489.92 902.2,486.66 902.2,483.4 902.2,480.14 902.2,476.88 902.2,473.62 902.2,470.36 902.2,467.1 902.2,463.84 902.2,460.58 902.2,457.32 902.2,454.06 902.2,450.8 902.2,447.54 902.2,444.28 902.2,441.02 902.2,437.76 902.2,434.5 902.2,431.24 902.2,427.98 902.2,424.72 902.2,421.46 902.2,418.2 902.2,414.94 902.2,411.68 902.2,408.42 902.2,405.16 902.2,401.9 902.2,398.64 902.2,395.38 902.2,392.12 902.2,388.86 902.2,385.6 902.2,382.34 902.2,379.08 902.2,375.82 902.2,372.56 902.2,369.3 902.2,366.04 902.2,362.78 902.2,359.52 902.2,356.26 902.2,353 902.2,349.74 902.2,346.48 902.2,343.22 902.2,339.96 902.2,336.7 902.2,333.44 902.2,330.18 902.2,326.92 902.2,323.66 902.2,320.4 902.2,317.14 902.2,313.88 902.2,310.62 902.2,307.36 902.2,304.1 902.2,300.84 902.2,297.58 902.2,294.32 902.2,291.06 902.2,287.8 902.2,284.54 902.2,281.28 902.2,278.02 902.2,274.76 902.2,271.5 902.2,268.24 902.2,264.98 902.2,261.72 902.2,258.46 902.2,255.2 902.2,251.94 902.2,248.68 902.2,245.42 902.2,242.16 902.2,238.9 902.2,235.64 902.2,232.38 902.2,229.12 902.2,225.86 902.2,222.6 902.2,219.34 902.2,216.08 902.2,212.82 902.2,209.56 902.2,206.3 902.2,203.04 902.2,199.78 902.2,196.52 902.2,193.26 902.2,190 902.2,186.74 902.2,183.48 902.2,180.22 902.2,176.96 902.2,173.7 902.2,170.44 902.2,167.18 902.2,163.92 902.2,160.66 902.2,157.4 902.2,154.14 902.2,150.88 902.2,147.62 902.2,144.36 902.2,141.1 902.2,137.84 902.2,134.58 902.2,131.32 902.2,128.06 902.2,124.8 902.2,121.54 902.2,118.28 902.2,115.02 902.2,111.76 902.2,108.5 902.2,105.24 902.2,101.98 902.2,98.72 902.2,95.46 902.2,92.2 902.2,88.94 902.2,85.68 902.2,82.42 902.2,79.16 902.2,75.9 902.2,72.64 902.2,69.38 902.2,66.12 902.2,62.86 902.2,59.6 902.2,56.34 902.2,53.08 902.2,49.82 902.2,46.56 902.2,43.3 902.2,40.04 902.2,36.78 902.2,33.52 902.2,30.26 902.2,27.65"/>
<polyline points="902.2,613.8 901.35,610.54 900.49,607.28 899.64,604.02 898.79,600.76 897.94,597.5 897.09,594.24 896.24,590.98 895.39,587.72 894.55,584.46 893.71,581.2 892.87,577.94 892.03,574.68 891.2,571.42 890.37,568.16 889.54,564.9 888.72,561.64 887.9,558.38 887.09,555.12 886.28,551.86 885.48,548.6 884.68,545.34 883.88,542.08 883.09,538.82 882.31,535.56 881.53,532.3 880.76,529.04 880,525.78 879.24,522.52 878.49,519.26 877.75,516 877.01,512.74 876.29,509.48 875.57,506.22 874.86,502.96 874.15,499.7 873.46,496.44 872.77,493.18 872.09,489.92 871.43,486.66 870.77,483.4 870.12,480.14 869.48,476.88 868.85,473.62 868.23,470.36 867.62,467.1 867.02,463.84 866.44,460.58 865.86,457.32 865.29,454.06 864.74,450.8 864.2,447.54 863.67,444.28 863.15,441.02 862.64,437.76 862.14,434.5 861.66,431.24 861.19,427.98 860.73,424.72 860.28,421.46 859.85,418.2 859.43,414.94 859.02,411.68 858.63,408.42 858.25,405.16 857.88,401.9 857.53,398.64 857.19,395.38 856.86,392.12 856.55,388.86 856.25,385.6 855.96,382.34 855.69,379.08 855.44,375.82 855.19,372.56 854.97,369.3 854.75,366.04 854.55,362.78 854.37,359.52 854.2,356.26 854.04,353 853.9,349.74 853.78,346.48 853.66,343.22 853.57,339.96 853.49,336.7 853.42,333.44 853.37,330.18 853.33,326.92 853.31,323.66 853.3,320.4 853.31,317.14 853.33,313.88 853.37,310.62 853.42,307.36 853.49,304.1 853.57,300.84 853.66,297.58 853.78,294.32 853.9,291.06 854.04,287.8 854.2,284.54 854.37,281.28 854.55,278.02 854.75,274.76 854.97,271.5 855.19,268.24 855.44,264.98 855.69,261.72 855.96,258.46 856.25,255.2 856.55,251.94 856.86,248.68 857.19,245.42 857.53,242.16 857.88,238.9 858.25,235.64 858.63,232.38 859.02,229.12 859.43,225.86 859.85,222.6 860.28,219.34 860.73,216.08 861.19,212.82 861.66,209.56 862.14,206.3 862.64,203.04 863.15,199.78 863.67,196.52 864.2,193.26 864.74,190 865.29,186.74 865.86,183.48 866.44,180.22 867.02,176.96 867.62,173.7 868.23,170.44 868.85,167.18 869.48,163.92 870.12,160.66 870.77,157.4 871.43,154.14 872.09,150.88 872.77,147.62 873.46,144.36 874.15,141.1 874.86,137.84 875.57,134.58 876.29,131.32 877.01,128.06 877.75,124.8 878.49,121.54 879.24,118.28 880,115.02 880.76,111.76 881.53,108.5 882.31,105.24 883.09,101.98 883.88,98.72 884.68,95.46 885.48,92.2 886.28,88.94 887.09,85.68 887.9,82.42 888.72,79.16 889.54,75.9 890.37,72.64 891.2,69.38 892.03,66.12 892.87,62.86 893.71,59.6 894.55,56.34 895.39,53.08 896.24,49.82 897.09,46.56 897.94,43.3 898.79,40.04 899.64,36.78 900.49,33.52 901.35,30.26 902.03,27.65"/>
<polyline points="902.2,613.8 900.49,610.54 898.79,607.28 897.08,604.02 895.38,600.76 893.68,597.5 891.98,594.24 890.28,590.98 888.59,587.72 886.9,584.46 885.22,581.2 883.54,577.94 881.87,574.68 880.2,571.42 878.54,568.16 876.89,564.9 875.24,561.64 873.61,558.38 871.98,555.12 870.36,551.86 868.75,548.6 867.15,545.34 865.56,542.08 863.99,538.82 862.42,535.56 860.87,532.3 859.33,529.04 857.8,525.78 856.29,522.52 854.79,519.26 853.3,516 851.83,512.74 850.37,509.48 848.93,506.22 847.51,502.96 846.1,499.7 844.71,496.44 843.34,493.18 841.99,489.92 840.65,486.66 839.34,483.4 838.04,480.14 836.76,476.88 835.5,473.62 834.26,470.36 833.04,467.1 831.85,463.84 830.67,460.58 829.52,457.32 828.39,454.06 827.28,450.8 826.2,447.54 825.13,444.28 824.09,441.02 823.08,437.76 822.09,434.5 821.12,431.24 820.18,427.98 819.26,424.72 818.37,421.46 817.5,418.2 816.66,414.94 815.85,411.68 815.06,408.42 814.3,405.16 813.56,401.9 812.86,398.64 812.17,395.38 811.52,392.12 810.9,388.86 810.3,385.6 809.73,382.34 809.19,379.08 808.67,375.82 808.19,372.56 807.73,369.3 807.31,366.04 806.91,362.78 806.54,359.52 806.2,356.26 805.89,353 805.6,349.74 805.35,346.48 805.13,343.22 804.94,339.96 804.77,336.7 804.64,333.44 804.53,330.18 804.46,326.92 804.41,323.66 804.4,320.4 804.41,317.14 804.46,313.88 804.53,310.62 804.64,307.36 804.77,304.1 804.94,300.84 805.13,297.58 805.35,294.32 805.6,291.06 805.89,287.8 806.2,284.54 806.54,281.28 806.91,278.02 807.31,274.76 807.73,271.5 808.19,268.24 808.67,264.98 809.19,261.72 809.73,258.46 810.3,255.2 810.9,251.94 811.52,248.68 812.17,245.42 812.86,242.16 813.56,238.9 814.3,235.64 815.06,232.38 815.85,229.12 816.66,225.86 817.5,222.6 818.37,219.34 819.26,216.08 820.18,212.82 821.12,209.56 822.09,206.3 823.08,203.04 824.09,199.78 825.13,196.52 826.2,193.26 827.28,190 828.39,186.74 829.52,183.48 830.67,180.22 831.85,176.96 833.04,173.7 834.26,170.44 835.5,167.18 836.76,163.92 838.04,160.66 839.34,157.4 840.65,154.14 841.99,150.88 843.34,147.62 844.71,144.36 846.1,141.1 847.51,137.84 848.93,134.58 850.37,131.32 851.83,128.06 853.3,124.8 854.79,121.54 856.29,118.28 857.8,115.02 859.33,111.76 860.87,108.5 862.42,105.24 863.99,101.98 865.56,98.72 867.15,95.46 868.75,92.2 870.36,88.94 871.98,85.68 873.61,82.42 875.24,79.16 876.89,75.9 878.54,72.64 880.2,69.38 881.87,66.12 883.54,62.86 885.22,59.6 886.9,56.34 888.59,53.08 890.28,49.82 891.98,46.56 893.68,43.3 895.38,40.04 897.08,36.78 898.79,33.52 900.49,30.26 901.86,27.65"/>
<polyline points="902.2,613.8 899.64,610.54 897.08,607.28 894.52,604.02 891.97,600.76 889.41,597.5 886.87,594.24 884.32,590.98 881.78,587.72 879.25,584.46 876.73,581.2 874.21,577.94 871.7,574.68 869.2,571.42 866.71,568.16 864.23,564.9 861.76,561.64 859.31,558.38 856.87,555.12 854.44,551.86 852.03,548.6 849.63,545.34 847.25,542.08 844.88,538.82 842.53,535.56 840.2,532.3 837.89,529.04 835.6,525.78 833.33,522.52 831.08,519.26 828.85,516 826.64,512.74 824.46,509.48 822.3,506.22 820.17,502.96 818.06,499.7 815.97,496.44 813.91,493.18 811.88,489.92 809.88,486.66 807.9,483.4 805.96,480.14 804.04,476.88 802.15,473.62 800.29,470.36 798.47,467.1 796.67,463.84 794.91,460.58 793.18,457.32 791.48,454.06 789.82,450.8 788.19,447.54 786.6,444.28 785.04,441.02 783.52,437.76 782.03,434.5 780.58,431.24 779.17,427.98 777.79,424.72 776.45,421.46 775.15,418.2 773.89,414.94 772.67,411.68 771.49,408.42 770.35,405.16 769.24,401.9 768.18,398.64 767.16,395.38 766.18,392.12 765.24,388.86 764.35,385.6 763.49,382.34 762.68,379.08 761.91,375.82 761.18,372.56 760.5,369.3 759.86,366.04 759.26,362.78 758.71,359.52 758.2,356.26 757.73,353 757.31,349.74 756.93,346.48 756.59,343.22 756.3,339.96 756.06,336.7 755.86,333.44 755.7,330.18 755.59,326.92 755.52,323.66 755.5,320.4 755.52,317.14 755.59,313.88 755.7,310.62 755.86,307.36 756.06,304.1 756.3,300.84 756.59,297.58 756.93,294.32 757.31,291.06 757.73,287.8 758.2,284.54 758.71,281.28 759.26,278.02 759.86,274.76 760.5,271.5 761.18,268.24 761.91,264.98 762.68,261.72 763.49,258.46 764.35,255.2 765.24,251.94 766.18,248.68 767.16,245.42 768.18,242.16 769.24,238.9 770.35,235.64 771.49,232.38 772.67,229.12 773.89,225.86 775.15,222.6 776.45,219.34 777.79,216.08 779.17,212.82 780.58,209.56 782.03,206.3 783.52,203.04 785.04,199.78 786.6,196.52 788.19,193.26 789.82,190 791.48,186.74 793.18,183.48 794.91,180.22 796.67,176.96 798.47,173.7 800.29,170.44 802.15,167.18 804.04,163.92 805.96,160.66 807.9,157.4 809.88,154.14 811.88,150.88 813.91,147.62 815.97,144.36 818.06,141.1 820.17,137.84 822.3,134.58 824.46,131.32 826.64,128.06 828.85,124.8 831.08,121.54 833.33,118.28 835.6,115.02 837.89,111.76 840.2,108.5 842.53,105.24 844.88,101.98 847.25,98.72 849.63,95.46 852.03,92.2 854.44,88.94 856.87,85.68 859.31,82.42 861.76,79.16 864.23,75.9 866.71,72.64 869.2,69.38 871.7,66.12 874.21,62.86 876.73,59.6 879.25,56.34 881.78,53.08 884.32,49.82 886.87,46.56 889.41,43.3 891.97,40.04 894.52,36.78 897.08,33.52 899.64,30.26 901.69,27.65"/>
<polyline points="902.2,613.8 898.79,610.54 895.37,607.28 891.96,604.02 888.56,600.76 885.15,597.5 881.75,594.24 878.36,590.98 874.98,587.72 871.6,584.46 868.23,581.2 864.88,577.94 861.53,574.68 858.2,571.42 854.88,568.16 851.57,564.9 848.29,561.64 845.01,558.38 841.76,555.12 838.52,551.86 835.3,548.6 832.1,545.34 828.93,542.08 825.77,538.82 822.64,535.56 819.54,532.3 816.45,529.04 813.4,525.78 810.37,522.52 807.37,519.26 804.4,516 801.46,512.74 798.55,509.48 795.67,506.22 792.82,502.96 790.01,499.7 787.23,496.44 784.48,493.18 781.78,489.92 779.1,486.66 776.47,483.4 773.87,480.14 771.32,476.88 768.8,473.62 766.32,470.36 763.89,467.1 761.5,463.84 759.15,460.58 756.84,457.32 754.58,454.06 752.36,450.8 750.19,447.54 748.07,444.28 745.99,441.02 743.96,437.76 741.97,434.5 740.04,431.24 738.16,427.98 736.32,424.72 734.54,421.46 732.81,418.2 731.12,414.94 729.5,411.68 727.92,408.42 726.4,405.16 724.93,401.9 723.51,398.64 722.15,395.38 720.84,392.12 719.59,388.86 718.4,385.6 717.26,382.34 716.17,379.08 715.15,375.82 714.18,372.56 713.26,369.3 712.41,366.04 711.61,362.78 710.87,359.52 710.19,356.26 709.57,353 709.01,349.74 708.5,346.48 708.06,343.22 707.67,339.96 707.34,336.7 707.08,333.44 706.87,330.18 706.72,326.92 706.63,323.66 706.6,320.4 706.63,317.14 706.72,313.88 706.87,310.62 707.08,307.36 707.34,304.1 707.67,300.84 708.06,297.58 708.5,294.32 709.01,291.06 709.57,287.8 710.19,284.54 710.87,281.28 711.61,278.02 712.41,274.76 713.26,271.5 714.18,268.24 715.15,264.98 716.17,261.72 717.26,258.46 718.4,255.2 719.59,251.94 720.84,248.68 722.15,245.42 723.51,242.16 724.93,238.9 726.4,235.64 727.92,232.38 729.5,229.12 731.12,225.86 732.81,222.6 734.54,219.34 736.32,216.08 738.16,212.82 740.04,209.56 741.97,206.3 743.96,203.04 745.99,199.78 748.07,196.52 750.19,193.26 752.36,190 754.58,186.74 756.84,183.48 759.15,180.22 761.5,176.96 763.89,173.7 766.32,170.44 768.8,167.18 771.32,163.92 773.87,160.66 776.47,157.4 779.1,154.14 781.78,150.88 784.48,147.62 787.23,144.36 790.01,141.1 792.82,137.84 795.67,134.58 798.55,131.32 801.46,128.06 804.4,124.8 807.37,121.54 810.37,118.28 813.4,115.02 816.45,111.76 819.54,108.5 822.64,105.24 825.77,101.98 828.93,98.72 832.1,95.46 835.3,92.2 838.52,88.94 841.76,85.68 845.01,82.42 848.29,79.16 851.57,75.9 854.88,72.64 858.2,69.38 861.53,66.12 864.88,62.86 868.23,59.6 871.6,56.34 874.98,53.08 878.36,49.82 881.75,46.56 885.15,43.3 888.56,40.04 891.96,36.78 895.37,33.52 898.79,30.26 901.52,27.65"/>
<polyline points="902.2,613.8 897.93,610.54 893.67,607.28 889.4,604.02 885.14,600.76 880.89,597.5 876.64,594.24 872.4,590.98 868.17,587.72 863.95,584.46 859.74,581.2 855.55,577.94 851.37,574.68 847.2,571.42 843.05,568.16 838.92,564.9 834.81,561.64 830.72,558.38 826.65,555.12 822.6,551.86 818.58,548.6 814.58,545.34 810.61,542.08 806.67,538.82 802.75,535.56 798.87,532.3 795.02,529.04 791.2,525.78 787.41,522.52 783.66,519.26 779.95,516 776.27,512.74 772.63,509.48 769.04,506.22 765.48,502.96 761.96,499.7 758.49,496.44 755.06,493.18 751.67,489.92 748.33,486.66 745.04,483.4 741.79,480.14 738.6,476.88 735.45,473.62 732.36,470.36 729.31,467.1 726.32,463.84 723.38,460.58 720.5,457.32 717.67,454.06 714.9,450.8 712.19,447.54 709.53,444.28 706.93,441.02 704.4,437.76 701.92,434.5 699.5,431.24 697.15,427.98 694.85,424.72 692.62,421.46 690.46,418.2 688.36,414.94 686.32,411.68 684.35,408.42 682.44,405.16 680.61,401.9 678.84,398.64 677.14,395.38 675.5,392.12 673.94,388.86 672.45,385.6 671.02,382.34 669.67,379.08 668.38,375.82 667.17,372.56 666.03,369.3 664.96,366.04 663.97,362.78 663.04,359.52 662.19,356.26 661.41,353 660.71,349.74 660.08,346.48 659.52,343.22 659.04,339.96 658.63,336.7 658.3,333.44 658.04,330.18 657.85,326.92 657.74,323.66 657.7,320.4 657.74,317.14 657.85,313.88 658.04,310.62 658.3,307.36 658.63,304.1 659.04,300.84 659.52,297.58 660.08,294.32 660.71,291.06 661.41,287.8 662.19,284.54 663.04,281.28 663.97,278.02 664.96,274.76 666.03,271.5 667.17,268.24 668.38,264.98 669.67,261.72 671.02,258.46 672.45,255.2 673.94,251.94 675.5,248.68 677.14,245.42 678.84,242.16 680.61,238.9 682.44,235.64 684.35,232.38 686.32,229.12 688.36,225.86 690.46,222.6 692.62,219.34 694.85,216.08 697.15,212.82 699.5,209.56 701.92,206.3 704.4,203.04 706.93,199.78 709.53,196.52 712.19,193.26 714.9,190 717.67,186.74 720.5,183.48 723.38,180.22 726.32,176.96 729.31,173.7 732.36,170.44 735.45,167.18 738.6,163.92 741.79,160.66 745.04,157.4 748.33,154.14 751.67,150.88 755.06,147.62 758.49,144.36 761.96,141.1 765.48,137.84 769.04,134.58 772.63,131.32 776.27,128.06 779.95,124.8 783.66,121.54 787.41,118.28 791.2,115.02 795.02,111.76 798.87,108.5 802.75,105.24 806.67,101.98 810.61,98.72 814.58,95.46 818.58,92.2 822.6,88.94 826.65,85.68 830.72,82.42 834.81,79.16 838.92,75.9 843.05,72.64 847.2,69.38 851.37,66.12 855.55,62.86 859.74,59.6 863.95,56.34 868.17,53.08 872.4,49.82 876.64,46.56 880.89,43.3 885.14,40.04 889.4,36.78 893.67,33.52 897.93,30.26 901.35,27.65"/>
<polyline points="902.2,613.8 897.08,610.54 891.96,607.28 886.84,604.02 881.73,600.76 876.63,597.5 871.53,594.24 866.44,590.98 861.37,587.72 856.3,584.46 851.25,581.2 846.22,577.94 841.2,574.68 836.2,571.42 831.22,568.16 826.26,564.9 821.33,561.64 816.42,558.38 811.53,555.12 806.68,551.86 801.85,548.6 797.05,545.34 792.29,542.08 787.56,538.82 782.86,535.56 778.2,532.3 773.58,529.04 769,525.78 764.46,522.52 759.96,519.26 755.5,516 751.09,512.74 746.72,509.48 742.4,506.22 738.13,502.96 733.91,499.7 729.74,496.44 725.63,493.18 721.56,489.92 717.56,486.66 713.61,483.4 709.71,480.14 705.88,476.88 702.1,473.62 698.39,470.36 694.73,467.1 691.15,463.84 687.62,460.58 684.16,457.32 680.77,454.06 677.44,450.8 674.19,447.54 671,444.28 667.88,441.02 664.83,437.76 661.86,434.5 658.96,431.24 656.13,427.98 653.38,424.72 650.71,421.46 648.11,418.2 645.59,414.94 643.14,411.68 640.78,408.42 638.49,405.16 636.29,401.9 634.17,398.64 632.12,395.38 630.16,392.12 628.29,388.86 626.49,385.6 624.78,382.34 623.16,379.08 621.62,375.82 620.17,372.56 618.8,369.3 617.52,366.04 616.32,362.78 615.21,359.52 614.19,356.26 613.26,353 612.41,349.74 611.66,346.48 610.99,343.22 610.41,339.96 609.92,336.7 609.51,333.44 609.2,330.18 608.98,326.92 608.84,323.66 608.8,320.4 608.84,317.14 608.98,313.88 609.2,310.62 609.51,307.36 609.92,304.1 610.41,300.84 610.99,297.58 611.66,294.32 612.41,291.06 613.26,287.8 614.19,284.54 615.21,281.28 616.32,278.02 617.52,274.76 618.8,271.5 620.17,268.24 621.62,264.98 623.16,261.72 624.78,258.46 626.49,255.2 628.29,251.94 630.16,248.68 632.12,245.42 634.17,242.16 636.29,238.9 638.49,235.64 640.78,232.38 643.14,229.12 645.59,225.86 648.11,222.6 650.71,219.34 653.38,216.08 656.13,212.82 658.96,209.56 661.86,206.3 664.83,203.04 667.88,199.78 671,196.52 674.19,193.26 677.44,190 680.77,186.74 684.16,183.48 687.62,180.22 691.15,176.96 694.73,173.7 698.39,170.44 702.1,167.18 705.88,163.92 709.71,160.66 713.61,157.4 717.56,154.14 721.56,150.88 725.63,147.62 729.74,144.36 733.91,141.1 738.13,137.84 742.4,134.58 746.72,131.32 751.09,128.06 755.5,124.8 759.96,121.54 764.46,118.28 769,115.02 773.58,111.76 778.2,108.5 782.86,105.24 787.56,101.98 792.29,98.72 797.05,95.46 801.85,92.2 806.68,88.94 811.53,85.68 816.42,82.42 821.33,79.16 826.26,75.9 831.22,72.64 836.2,69.38 841.2,66.12 846.22,62.86 851.25,59.6 856.3,56.34 861.37,53.08 866.44,49.82 871.53,46.56 876.63,43.3 881.73,40.04 886.84,36.78 891.96,33.52 897.08,30.26 901.18,27.65"/>
<polyline points="902.2,613.8 896.23,610.54 890.25,607.28 884.29,604.02 878.32,600.76 872.37,597.5 866.42,594.24 860.48,590.98 854.56,587.72 848.65,584.46 842.76,581.2 836.89,577.94 831.03,574.68 825.2,571.42 819.39,568.16 813.61,564.9 807.85,561.64 802.12,558.38 796.42,555.12 790.76,551.86 785.13,548.6 779.53,545.34 773.97,542.08 768.45,538.82 762.97,535.56 757.54,532.3 752.15,529.04 746.8,525.78 741.5,522.52 736.25,519.26 731.05,516 725.9,512.74 720.81,509.48 715.77,506.22 710.79,502.96 705.86,499.7 701,496.44 696.2,493.18 691.46,489.92 686.78,486.66 682.17,483.4 677.63,480.14 673.16,476.88 668.75,473.62 664.42,470.36 660.16,467.1 655.97,463.84 651.86,460.58 647.82,457.32 643.86,454.06 639.98,450.8 636.18,447.54 632.46,444.28 628.83,441.02 625.27,437.76 621.8,434.5 618.42,431.24 615.12,427.98 611.91,424.72 608.79,421.46 605.76,418.2 602.82,414.94 599.97,411.68 597.21,408.42 594.54,405.16 591.97,401.9 589.49,398.64 587.11,395.38 584.82,392.12 582.64,388.86 580.54,385.6 578.55,382.34 576.65,379.08 574.86,375.82 573.16,372.56 571.56,369.3 570.07,366.04 568.67,362.78 567.38,359.52 566.19,356.26 565.1,353 564.11,349.74 563.23,346.48 562.45,343.22 561.78,339.96 561.2,336.7 560.73,333.44 560.37,330.18 560.11,326.92 559.95,323.66 559.9,320.4 559.95,317.14 560.11,313.88 560.37,310.62 560.73,307.36 561.2,304.1 561.78,300.84 562.45,297.58 563.23,294.32 564.11,291.06 565.1,287.8 566.19,284.54 567.38,281.28 568.67,278.02 570.07,274.76 571.56,271.5 573.16,268.24 574.86,264.98 576.65,261.72 578.55,258.46 580.54,255.2 582.64,251.94 584.82,248.68 587.11,245.42 589.49,242.16 591.97,238.9 594.54,235.64 597.21,232.38 599.97,229.12 602.82,225.86 605.76,222.6 608.79,219.34 611.91,216.08 615.12,212.82 618.42,209.56 621.8,206.3 625.27,203.04 628.83,199.78 632.46,196.52 636.18,193.26 639.98,190 643.86,186.74 647.82,183.48 651.86,180.22 655.97,176.96 660.16,173.7 664.42,170.44 668.75,167.18 673.16,163.92 677.63,160.66 682.17,157.4 686.78,154.14 691.46,150.88 696.2,147.62 701,144.36 705.86,141.1 710.79,137.84 715.77,134.58 720.81,131.32 725.9,128.06 731.05,124.8 736.25,121.54 741.5,118.28 746.8,115.02 752.15,111.76 757.54,108.5 762.97,105.24 768.45,101.98 773.97,98.72 779.53,95.46 785.13,92.2 790.76,88.94 796.42,85.68 802.12,82.42 807.85,79.16 813.61,75.9 819.39,72.64 825.2,69.38 831.03,66.12 836.89,62.86 842.76,59.6 848.65,56.34 854.56,53.08 860.48,49.82 866.42,46.56 872.37,43.3 878.32,40.04 884.29,36.78 890.25,33.52 896.23,30.26 901.01,27.65"/>
<polyline points="902.2,613.8 895.37,610.54 888.55,607.28 881.73,604.02 874.91,600.76 868.1,597.5 861.31,594.24 854.52,590.98 847.76,587.72 841,584.46 834.27,581.2 827.56,577.94 820.86,574.68 814.2,571.42 807.56,568.16 800.95,564.9 794.37,561.64 787.82,558.38 781.31,555.12 774.84,551.86 768.4,548.6 762.01,545.34 755.65,542.08 749.35,538.82 743.08,535.56 736.87,532.3 730.71,529.04 724.6,525.78 718.54,522.52 712.54,519.26 706.6,516 700.72,512.74 694.9,509.48 689.14,506.22 683.44,502.96 677.82,499.7 672.26,496.44 666.77,493.18 661.35,489.92 656.01,486.66 650.74,483.4 645.55,480.14 640.44,476.88 635.4,473.62 630.45,470.36 625.58,467.1 620.79,463.84 616.09,460.58 611.48,457.32 606.96,454.06 602.52,450.8 598.18,447.54 593.93,444.28 589.77,441.02 585.71,437.76 581.75,434.5 577.88,431.24 574.11,427.98 570.44,424.72 566.88,421.46 563.41,418.2 560.05,414.94 556.79,411.68 553.64,408.42 550.59,405.16 547.65,401.9 544.82,398.64 542.1,395.38 539.49,392.12 536.98,388.86 534.59,385.6 532.31,382.34 530.15,379.08 528.09,375.82 526.15,372.56 524.33,369.3 522.62,366.04 521.03,362.78 519.55,359.52 518.19,356.26 516.94,353 515.82,349.74 514.81,346.48 513.92,343.22 513.14,339.96 512.49,336.7 511.95,333.44 511.54,330.18 511.24,326.92 511.06,323.66 511,320.4 511.06,317.14 511.24,313.88 511.54,310.62 511.95,307.36 512.49,304.1 513.14,300.84 513.92,297.58 514.81,294.32 515.82,291.06 516.94,287.8 518.19,284.54 519.55,281.28 521.03,278.02 522.62,274.76 524.33,271.5 526.15,268.24 528.09,264.98 530.15,261.72 532.31,258.46 534.59,255.2 536.98,251.94 539.49,248.68 542.1,245.42 544.82,242.16 547.65,238.9 550.59,235.64 553.64,232.38 556.79,229.12 560.05,225.86 563.41,222.6 566.88,219.34 570.44,216.08 574.11,212.82 577.88,209.56 581.75,206.3 585.71,203.04 589.77,199.78 593.93,196.52 598.18,193.26 602.52,190 606.96,186.74 611.48,183.48 616.09,180.22 620.79,176.96 625.58,173.7 630.45,170.44 635.4,167.18 640.44,163.92 645.55,160.66 650.74,157.4 656.01,154.14 661.35,150.88 666.77,147.62 672.26,144.36 677.82,141.1 683.44,137.84 689.14,134.58 694.9,131.32 700.72,128.06 706.6,124.8 712.54,121.54 718.54,118.28 724.6,115.02 730.71,111.76 736.87,108.5 743.08,105.24 749.35,101.98 755.65,98.72 762.01,95.46 768.4,92.2 774.84,88.94 781.31,85.68 787.82,82.42 794.37,79.16 800.95,75.9 807.56,72.64 814.2,69.38 820.86,66.12 827.56,62.86 834.27,59.6 841,56.34 847.76,53.08 854.52,49.82 861.31,46.56 868.1,43.3 874.91,40.04 881.73,36.78 888.55,33.52 895.37,30.26 900.83,27.65"/>
<polyline points="902.2,613.8 894.52,610.54 886.84,607.28 879.17,604.02 871.5,600.76 863.84,597.5 856.2,594.24 848.57,590.98 840.95,587.72 833.35,584.46 825.78,581.2 818.22,577.94 810.7,574.68 803.2,571.42 795.73,568.16 788.29,564.9 780.89,561.64 773.53,558.38 766.2,555.12 758.92,551.86 751.68,548.6 744.48,545.34 737.34,542.08 730.24,538.82 723.2,535.56 716.21,532.3 709.27,529.04 702.4,525.78 695.59,522.52 688.84,519.26 682.15,516 675.53,512.74 668.98,509.48 662.5,506.22 656.1,502.96 649.77,499.7 643.52,496.44 637.34,493.18 631.25,489.92 625.24,486.66 619.31,483.4 613.47,480.14 607.72,476.88 602.05,473.62 596.48,470.36 591,467.1 585.62,463.84 580.33,460.58 575.14,457.32 570.05,454.06 565.06,450.8 560.18,447.54 555.4,444.28 550.72,441.02 546.15,437.76 541.69,434.5 537.34,431.24 533.1,427.98 528.97,424.72 524.96,421.46 521.06,418.2 517.28,414.94 513.61,411.68 510.07,408.42 506.64,405.16 503.33,401.9 500.15,398.64 497.09,395.38 494.15,392.12 491.33,388.86 488.64,385.6 486.08,382.34 483.64,379.08 481.33,375.82 479.15,372.56 477.1,369.3 475.17,366.04 473.38,362.78 471.72,359.52 470.19,356.26 468.79,353 467.52,349.74 466.38,346.48 465.38,343.22 464.51,339.96 463.77,336.7 463.17,333.44 462.7,330.18 462.37,326.92 462.17,323.66 462.1,320.4 462.17,317.14 462.37,313.88 462.7,310.62 463.17,307.36 463.77,304.1 464.51,300.84 465.38,297.58 466.38,294.32 467.52,291.06 468.79,287.8 470.19,284.54 471.72,281.28 473.38,278.02 475.17,274.76 477.1,271.5 479.15,268.24 481.33,264.98 483.64,261.72 486.08,258.46 488.64,255.2 491.33,251.94 494.15,248.68 497.09,245.42 500.15,242.16 503.33,238.9 506.64,235.64 510.07,232.38 513.61,229.12 517.28,225.86 521.06,222.6 524.96,219.34 528.97,216.08 533.1,212.82 537.34,209.56 541.69,206.3 546.15,203.04 550.72,199.78 555.4,196.52 560.18,193.26 565.06,190 570.05,186.74 575.14,183.48 580.33,180.22 585.62,176.96 591,173.7 596.48,170.44 602.05,167.18 607.72,163.92 613.47,160.66 619.31,157.4 625.24,154.14 631.25,150.88 637.34,147.62 643.52,144.36 649.77,141.1 656.1,137.84 662.5,134.58 668.98,131.32 675.53,128.06 682.15,124.8 688.84,121.54 695.59,118.28 702.4,115.02 709.27,111.76 716.21,108.5 723.2,105.24 730.24,101.98 737.34,98.72 744.48,95.46 751.68,92.2 758.92,88.94 766.2,85.68 773.53,82.42 780.89,79.16 788.29,75.9 795.73,72.64 803.2,69.38 810.7,66.12 818.22,62.86 825.78,59.6 833.35,56.34 840.95,53.08 848.57,49.82 856.2,46.56 863.84,43.3 871.5,40.04 879.17,36.78 886.84,33.52 894.52,30.26 900.66,27.65"/>
<polyline points="902.2,613.8 893.67,610.54 885.13,607.28 876.61,604.02 868.09,600.76 859.58,597.5 851.09,594.24 842.61,590.98 834.14,587.72 825.7,584.46 817.29,581.2 808.89,577.94 800.53,574.68 792.2,571.42 783.9,568.16 775.64,564.9 767.41,561.64 759.23,558.38 751.09,555.12 743,551.86 734.95,548.6 726.96,545.34 719.02,542.08 711.13,538.82 703.31,535.56 695.54,532.3 687.84,529.04 680.2,525.78 672.63,522.52 665.13,519.26 657.7,516 650.35,512.74 643.07,509.48 635.87,506.22 628.75,502.96 621.72,499.7 614.77,496.44 607.91,493.18 601.14,489.92 594.46,486.66 587.88,483.4 581.39,480.14 575,476.88 568.7,473.62 562.51,470.36 556.42,467.1 550.44,463.84 544.57,460.58 538.8,457.32 533.15,454.06 527.6,450.8 522.18,447.54 516.86,444.28 511.67,441.02 506.59,437.76 501.63,434.5 496.8,431.24 492.09,427.98 487.5,424.72 483.05,421.46 478.71,418.2 474.51,414.94 470.44,411.68 466.5,408.42 462.69,405.16 459.02,401.9 455.48,398.64 452.07,395.38 448.81,392.12 445.68,388.86 442.69,385.6 439.84,382.34 437.13,379.08 434.57,375.82 432.14,372.56 429.86,369.3 427.73,366.04 425.73,362.78 423.89,359.52 422.18,356.26 420.63,353 419.22,349.74 417.96,346.48 416.84,343.22 415.88,339.96 415.06,336.7 414.39,333.44 413.87,330.18 413.5,326.92 413.27,323.66 413.2,320.4 413.27,317.14 413.5,313.88 413.87,310.62 414.39,307.36 415.06,304.1 415.88,300.84 416.84,297.58 417.96,294.32 419.22,291.06 420.63,287.8 422.18,284.54 423.89,281.28 425.73,278.02 427.73,274.76 429.86,271.5 432.14,268.24 434.57,264.98 437.13,261.72 439.84,258.46 442.69,255.2 445.68,251.94 448.81,248.68 452.07,245.42 455.48,242.16 459.02,238.9 462.69,235.64 466.5,232.38 470.44,229.12 474.51,225.86 478.71,222.6 483.05,219.34 487.5,216.08 492.09,212.82 496.8,209.56 501.63,206.3 506.59,203.04 511.67,199.78 516.86,196.52 522.18,193.26 527.6,190 533.15,186.74 538.8,183.48 544.57,180.22 550.44,176.96 556.42,173.7 562.51,170.44 568.7,167.18 575,163.92 581.39,160.66 587.88,157.4 594.46,154.14 601.14,150.88 607.91,147.62 614.77,144.36 621.72,141.1 628.75,137.84 635.87,134.58 643.07,131.32 650.35,128.06 657.7,124.8 665.13,121.54 672.63,118.28 680.2,115.02 687.84,111.76 695.54,108.5 703.31,105.24 711.13,101.98 719.02,98.72 726.96,95.46 734.95,92.2 743,88.94 751.09,85.68 759.23,82.42 767.41,79.16 775.64,75.9 783.9,72.64 792.2,69.38 800.53,66.12 808.89,62.86 817.29,59.6 825.7,56.34 834.14,53.08 842.61,49.82 851.09,46.56 859.58,43.3 868.09,40.04 876.61,36.78 885.13,33.52 893.67,30.26 900.49,27.65"/>
<polyline points="902.2,613.8 892.81,610.54 883.43,607.28 874.05,604.02 864.68,600.76 855.32,597.5 845.97,594.24 836.65,590.98 827.34,587.72 818.05,584.46 808.79,581.2 799.56,577.94 790.36,574.68 781.2,571.42 772.07,568.16 762.98,564.9 753.93,561.64 744.93,558.38 735.98,555.12 727.08,551.86 718.23,548.6 709.43,545.34 700.7,542.08 692.03,538.82 683.42,535.56 674.87,532.3 666.4,529.04 658,525.78 649.67,522.52 641.42,519.26 633.25,516 625.16,512.74 617.16,509.48 609.24,506.22 601.41,502.96 593.67,499.7 586.03,496.44 578.48,493.18 571.04,489.92 563.69,486.66 556.44,483.4 549.31,480.14 542.27,476.88 535.35,473.62 528.54,470.36 521.85,467.1 515.27,463.84 508.8,460.58 502.46,457.32 496.24,454.06 490.14,450.8 484.17,447.54 478.33,444.28 472.61,441.02 467.03,437.76 461.58,434.5 456.26,431.24 451.08,427.98 446.03,424.72 441.13,421.46 436.36,418.2 431.74,414.94 427.26,411.68 422.93,408.42 418.74,405.16 414.7,401.9 410.8,398.64 407.06,395.38 403.47,392.12 400.03,388.86 396.74,385.6 393.61,382.34 390.63,379.08 387.8,375.82 385.14,372.56 382.63,369.3 380.28,366.04 378.09,362.78 376.05,359.52 374.18,356.26 372.47,353 370.92,349.74 369.53,346.48 368.31,343.22 367.25,339.96 366.35,336.7 365.61,333.44 365.04,330.18 364.63,326.92 364.38,323.66 364.3,320.4 364.38,317.14 364.63,313.88 365.04,310.62 365.61,307.36 366.35,304.1 367.25,300.84 368.31,297.58 369.53,294.32 370.92,291.06 372.47,287.8 374.18,284.54 376.05,281.28 378.09,278.02 380.28,274.76 382.63,271.5 385.14,268.24 387.8,264.98 390.63,261.72 393.61,258.46 396.74,255.2 400.03,251.94 403.47,248.68 407.06,245.42 410.8,242.16 414.7,238.9 418.74,235.64 422.93,232.38 427.26,229.12 431.74,225.86 436.36,222.6 441.13,219.34 446.03,216.08 451.08,212.82 456.26,209.56 461.58,206.3 467.03,203.04 472.61,199.78 478.33,196.52 484.17,193.26 490.14,190 496.24,186.74 502.46,183.48 508.8,180.22 515.27,176.96 521.85,173.7 528.54,170.44 535.35,167.18 542.27,163.92 549.31,160.66 556.44,157.4 563.69,154.14 571.04,150.88 578.48,147.62 586.03,144.36 593.67,141.1 601.41,137.84 609.24,134.58 617.16,131.32 625.16,128.06 633.25,124.8 641.42,121.54 649.67,118.28 658,115.02 666.4,111.76 674.87,108.5 683.42,105.24 692.03,101.98 700.7,98.72 709.43,95.46 718.23,92.2 727.08,88.94 735.98,85.68 744.93,82.42 753.93,79.16 762.98,75.9 772.07,72.64 781.2,69.38 790.36,66.12 799.56,62.86 808.79,59.6 818.05,56.34 827.34,53.08 836.65,49.82 845.97,46.56 855.32,43.3 864.68,40.04 874.05,36.78 883.43,33.52 892.81,30.26 900.32,27.65"/>
<polyline points="902.2,613.8 891.96,610.54 881.72,607.28 871.49,604.02 861.27,600.76 851.06,597.5 840.86,594.24 830.69,590.98 820.53,587.72 810.4,584.46 800.3,581.2 790.23,577.94 780.2,574.68 770.2,571.42 760.24,568.16 750.32,564.9 740.46,561.64 730.64,558.38 720.87,555.12 711.16,551.86 701.5,548.6 691.91,545.34 682.38,542.08 672.92,538.82 663.53,535.56 654.21,532.3 644.96,529.04 635.8,525.78 626.71,522.52 617.71,519.26 608.8,516 599.98,512.74 591.24,509.48 582.61,506.22 574.07,502.96 565.63,499.7 557.29,496.44 549.05,493.18 540.93,489.92 532.91,486.66 525.01,483.4 517.22,480.14 509.55,476.88 502,473.62 494.57,470.36 487.27,467.1 480.09,463.84 473.04,460.58 466.12,457.32 459.34,454.06 452.69,450.8 446.17,447.54 439.8,444.28 433.56,441.02 427.47,437.76 421.52,434.5 415.72,431.24 410.07,427.98 404.57,424.72 399.21,421.46 394.02,418.2 388.97,414.94 384.09,411.68 379.36,408.42 374.79,405.16 370.38,401.9 366.13,398.64 362.05,395.38 358.13,392.12 354.38,388.86 350.79,385.6 347.37,382.34 344.12,379.08 341.04,375.82 338.13,372.56 335.39,369.3 332.83,366.04 330.44,362.78 328.22,359.52 326.18,356.26 324.31,353 322.62,349.74 321.11,346.48 319.77,343.22 318.61,339.96 317.63,336.7 316.83,333.44 316.2,330.18 315.76,326.92 315.49,323.66 315.4,320.4 315.49,317.14 315.76,313.88 316.2,310.62 316.83,307.36 317.63,304.1 318.61,300.84 319.77,297.58 321.11,294.32 322.62,291.06 324.31,287.8 326.18,284.54 328.22,281.28 330.44,278.02 332.83,274.76 335.39,271.5 338.13,268.24 341.04,264.98 344.12,261.72 347.37,258.46 350.79,255.2 354.38,251.94 358.13,248.68 362.05,245.42 366.13,242.16 370.38,238.9 374.79,235.64 379.36,232.38 384.09,229.12 388.97,225.86 394.02,222.6 399.21,219.34 404.57,216.08 410.07,212.82 415.72,209.56 421.52,206.3 427.47,203.04 433.56,199.78 439.8,196.52 446.17,193.26 452.69,190 459.34,186.74 466.12,183.48 473.04,180.22 480.09,176.96 487.27,173.7 494.57,170.44 502,167.18 509.55,163.92 517.22,160.66 525.01,157.4 532.91,154.14 540.93,150.88 549.05,147.62 557.29,144.36 565.63,141.1 574.07,137.84 582.61,134.58 591.24,131.32 599.98,128.06 608.8,124.8 617.71,121.54 626.71,118.28 635.8,115.02 644.96,111.76 654.21,108.5 663.53,105.24 672.92,101.98 682.38,98.72 691.91,95.46 701.5,92.2 711.16,88.94 720.87,85.68 730.64,82.42 740.46,79.16 750.32,75.9 760.24,72.64 770.2,69.38 780.2,66.12 790.23,62.86 800.3,59.6 810.4,56.34 820.53,53.08 830.69,49.82 840.86,46.56 851.06,43.3 861.27,40.04 871.49,36.78 881.72,33.52 891.96,30.26 900.15,27.65"/>
<path d="M1054.08 565H750.32"/>
<path d="M1195.6 516H608.8"/>
<path d="M1317.13 467H487.27"/>
<path d="M1410.38 418H394.02"/>
<path d="M1469.01 369H335.39"/>
<path d="M1489 320H315.4"/>
<path d="M1469.01 271H335.39"/>
<path d="M1410.38 223H394.02"/>
<path d="M1317.13 174H487.27"/>
<path d="M1195.6 125H608.8"/>
<path d="M1054.08 76H750.32"/>
</g>
<g fill="none" stroke="#5c5c5c" stroke-width="1.39" stroke-dasharray="1.39 2.29">
<path d="M653.8 256.7C653.57 259.08 652.4 264.52 652.4 271C652.4 277.48 652.9 287.43 653.8 295.6C654.7 303.77 655.65 311.48 657.8 320C659.95 328.52 663.18 338.55 666.7 346.7C670.22 354.85 673.72 360.75 678.9 368.9C684.08 377.05 691.32 387.45 697.8 395.6C704.28 403.75 711.13 410.77 717.8 417.8C724.47 424.83 728.55 429.28 737.8 437.8C747.05 446.32 762.93 460.03 773.3 468.9C783.67 477.77 791.1 483.6 800 491C808.9 498.4 817.82 506.25 826.7 513.3C835.58 520.35 846.08 527.93 853.3 533.3C860.52 538.67 864.27 542.22 870 545.5C875.73 548.78 882.48 550.7 887.7 553C892.92 555.3 899.03 558.25 901.3 559.3"/>
<path d="M864.2 125.2C863.72 133.33 862.12 157.78 861.3 174C860.48 190.22 859.55 206.27 859.3 222.5C859.05 238.73 859.1 255.12 859.8 271.4C860.5 287.68 861.5 303.87 863.5 320.2C865.5 336.53 868.97 353.5 871.8 369.4C874.63 385.3 877.37 399.23 880.5 415.6C883.63 431.97 887.48 451.22 890.6 467.6C893.72 483.98 896.22 501.5 899.2 513.9C902.18 526.3 906.37 535.07 908.5 542C910.63 548.93 910.88 550.62 912 555.5C913.12 560.38 913.95 566.62 915.2 571.3C916.45 575.98 918.2 580.53 919.5 583.6C920.8 586.67 922.42 588.68 923 589.7"/>
</g>
<g fill="none" stroke="#8a8a8a" stroke-width="1.3">
<path d="M901.3 559.3Q912 563 923.3 561"/>
<path d="M922.7 589.3Q928 593 937.7 592"/>
</g>
<g fill="#8c8c8c" font-family="Liberation Sans, sans-serif" font-size="10.2">
<text x="300.3" y="330" textLength="26.04" lengthAdjust="spacingAndGlyphs">+180</text>
<text x="328" y="326.6" font-size="6.5">°</text>
<text x="398.1" y="330" textLength="26.04" lengthAdjust="spacingAndGlyphs">+150</text>
<text x="425.8" y="326.6" font-size="6.5">°</text>
<text x="495.9" y="330" textLength="26.04" lengthAdjust="spacingAndGlyphs">+120</text>
<text x="523.6" y="326.6" font-size="6.5">°</text>
<text x="596.8" y="330" textLength="19.87" lengthAdjust="spacingAndGlyphs">+90</text>
<text x="618.3" y="326.6" font-size="6.5">°</text>
<text x="694.6" y="330" textLength="19.87" lengthAdjust="spacingAndGlyphs">+60</text>
<text x="716.1" y="326.6" font-size="6.5">°</text>
<text x="792.4" y="330" textLength="19.87" lengthAdjust="spacingAndGlyphs">+30</text>
<text x="813.9" y="326.6" font-size="6.5">°</text>
<text x="893.3" y="330" textLength="13.7" lengthAdjust="spacingAndGlyphs">+0</text>
<text x="908.6" y="326.6" font-size="6.5">°</text>
<text x="984.9" y="330" textLength="26.04" lengthAdjust="spacingAndGlyphs">+330</text>
<text x="1012.6" y="326.6" font-size="6.5">°</text>
<text x="1082.7" y="330" textLength="26.04" lengthAdjust="spacingAndGlyphs">+300</text>
<text x="1110.4" y="326.6" font-size="6.5">°</text>
<text x="1180.5" y="330" textLength="26.04" lengthAdjust="spacingAndGlyphs">+270</text>
<text x="1208.2" y="326.6" font-size="6.5">°</text>
<text x="1278.3" y="330" textLength="26.04" lengthAdjust="spacingAndGlyphs">+240</text>
<text x="1306" y="326.6" font-size="6.5">°</text>
<text x="1376.1" y="330" textLength="26.04" lengthAdjust="spacingAndGlyphs">+210</text>
<text x="1403.8" y="326.6" font-size="6.5">°</text>
<text x="1473.9" y="330" textLength="26.04" lengthAdjust="spacingAndGlyphs">+180</text>
<text x="1501.6" y="326.6" font-size="6.5">°</text>
<text x="890.2" y="25" textLength="19.87" lengthAdjust="spacingAndGlyphs">+90</text>
<text x="911.7" y="21.6" font-size="6.5">°</text>
<text x="890.2" y="122.8" textLength="19.87" lengthAdjust="spacingAndGlyphs">+60</text>
<text x="911.7" y="119.4" font-size="6.5">°</text>
<text x="890.2" y="220.6" textLength="19.87" lengthAdjust="spacingAndGlyphs">+30</text>
<text x="911.7" y="217.2" font-size="6.5">°</text>
<text x="890.2" y="428.6" textLength="19.87" lengthAdjust="spacingAndGlyphs">−30</text>
<text x="911.7" y="425.2" font-size="6.5">°</text>
<text x="890.2" y="526.4" textLength="19.87" lengthAdjust="spacingAndGlyphs">−60</text>
<text x="911.7" y="523" font-size="6.5">°</text>
<text x="890.2" y="624.2" textLength="19.87" lengthAdjust="spacingAndGlyphs">−90</text>
<text x="911.7" y="620.8" font-size="6.5">°</text>
</g>
<g fill="#fff" font-family="Liberation Mono, monospace" font-size="14.6">
<text x="315" y="30.2" textLength="50.22" lengthAdjust="spacingAndGlyphs" xml:space="preserve">BR000F</text>
<text x="315" y="43" textLength="318.06" lengthAdjust="spacingAndGlyphs" xml:space="preserve">Beg: 20251025 23:53:43 (sol = 212.47°)</text>
<text x="315" y="57" textLength="318.06" lengthAdjust="spacingAndGlyphs" xml:space="preserve">End: 20251026 00:53:46 (sol = 212.51°)</text>
<text x="315" y="68.6" textLength="318.06" lengthAdjust="spacingAndGlyphs" xml:space="preserve">--------------------------------------</text>
<text x="315" y="82" textLength="50.22" lengthAdjust="spacingAndGlyphs" xml:space="preserve">...: 2</text>
</g>
<g fill="#616161" font-family="Liberation Sans, sans-serif" font-size="29.8">
<text transform="translate(149.2 697.17) rotate(-90)" textLength="55.25" lengthAdjust="spacingAndGlyphs">APR</text>
<text transform="translate(294.2 701.9) rotate(-90)" textLength="57.78" lengthAdjust="spacingAndGlyphs">MAY</text>
<text transform="translate(435.8 690.85) rotate(-90)" textLength="49.54" lengthAdjust="spacingAndGlyphs">JUN</text>
<text transform="translate(575.8 685.99) rotate(-90)" textLength="44.57" lengthAdjust="spacingAndGlyphs">JUL</text>
<text transform="translate(723 700.78) rotate(-90)" textLength="59.47" lengthAdjust="spacingAndGlyphs">AUG</text>
<text transform="translate(872 694.93) rotate(-90)" textLength="52.06" lengthAdjust="spacingAndGlyphs">SEP</text>
<text transform="translate(1015.8 700.9) rotate(-90)" textLength="58.11" lengthAdjust="spacingAndGlyphs">OCT</text>
<text transform="translate(1169.2 705) rotate(-90)" textLength="60.46" lengthAdjust="spacingAndGlyphs">NOV</text>
<text transform="translate(1318.3 701.9) rotate(-90)" textLength="57.84" lengthAdjust="spacingAndGlyphs">DEC</text>
<text transform="translate(1469.2 689.51) rotate(-90)" textLength="48.86" lengthAdjust="spacingAndGlyphs">JAN</text>
<text transform="translate(1628.3 696.9) rotate(-90)" textLength="51.52" lengthAdjust="spacingAndGlyphs">FEB</text>
<text transform="translate(1766.2 705.7) rotate(-90)" textLength="62.05" lengthAdjust="spacingAndGlyphs">MAR</text>
</g>
<line x1="1061.78" y1="842.3" x2="1061.78" y2="641.5" stroke="#ff0000" stroke-width="2.08" stroke-dasharray="5.44 1.95" stroke-dashoffset="1.17"/>
<g stroke="#bddf26" stroke-width="4.0">
<path d="M106 834H128.9"/>
<path d="M165 834H345"/>
<path d="M365.9 834H625"/>
<path d="M635 834H785.9"/>
<path d="M807 834H898.9"/>
<path d="M920 834H973"/>
<path d="M984.1 834H1065.9"/>
<path d="M1082 834H1203"/>
<path d="M1243.9 834H1325.9"/>
<path d="M1337 834H1355"/>
<path d="M1381.1 834H1443.9"/>
<path d="M1459.1 834H1512"/>
<path d="M1523.1 834H1547"/>
<path d="M1724.1 834H1748"/>
<path d="M1758 834H1782"/>
</g>
<g stroke="#81d34d" stroke-width="4.0">
<path d="M165 818H188"/>
<path d="M223 818H286"/>
<path d="M312 818H340"/>
<path d="M365.9 818H492"/>
<path d="M508.1 818H653.9"/>
<path d="M704.1 818H737"/>
<path d="M773 818H845"/>
<path d="M871.1 818H988"/>
<path d="M1003.1 818H1017"/>
<path d="M1062 818H1213"/>
<path d="M1243.9 818H1267"/>
<path d="M1293.1 818H1315.9"/>
<path d="M1342 818H1365"/>
<path d="M1386.1 818H1428.9"/>
<path d="M1459.1 818H1483.1"/>
<path d="M1548.1 818H1571.1"/>
</g>
<g stroke="#4ec36b" stroke-width="4.0">
<path d="M165 802H188"/>
<path d="M258 802H487"/>
<path d="M508.1 802H615"/>
<path d="M626.1 802H718"/>
<path d="M728.9 802H826.1"/>
<path d="M949.1 802H1148.9"/>
<path d="M1160 802H1248"/>
<path d="M1258 802H1443.9"/>
<path d="M1459.1 802H1483.1"/>
<path d="M1552 802H1576.1"/>
</g>
<g stroke="#2ab07f" stroke-width="4.0">
<path d="M193.9 785H218"/>
<path d="M320.9 785H506.9"/>
<path d="M518 785H540.9"/>
<path d="M557 785H683"/>
<path d="M807 785H831.1"/>
<path d="M954.1 785H973"/>
<path d="M988 785H1125"/>
<path d="M1155 785H1218.1"/>
<path d="M1243.9 785H1267"/>
<path d="M1317 785H1341.1"/>
<path d="M1395.9 785H1418.9"/>
<path d="M1464.1 785H1650"/>
</g>
<g stroke="#1e9b8a" stroke-width="4.0">
<path d="M340.9 769H370"/>
<path d="M410 769H448"/>
<path d="M468.9 769H492"/>
<path d="M527 769H546.1"/>
<path d="M562 769H590"/>
<path d="M615.9 769H648.9"/>
<path d="M959.1 769H988"/>
<path d="M1062 769H1085.9"/>
<path d="M1100.9 769H1125"/>
<path d="M1160 769H1194.1"/>
<path d="M1248 769H1272"/>
<path d="M1425 769H1512"/>
</g>
<g stroke="#25858e" stroke-width="4.0">
<path d="M420 752H443"/>
<path d="M532 752H555.9"/>
<path d="M567 752H590"/>
<path d="M620.9 752H742"/>
<path d="M969.1 752H1135"/>
<path d="M1185 752H1346.1"/>
<path d="M1468.9 752H1493"/>
</g>
<g stroke="#2d708e" stroke-width="4.0">
<path d="M429.1 736H453"/>
<path d="M575.9 736H733"/>
<path d="M993 736H1105"/>
<path d="M1116.1 736H1223"/>
<path d="M1263 736H1291.9"/>
<path d="M1488.9 736H1512"/>
</g>
<g stroke="#375a8c" stroke-width="4.0">
<path d="M590.9 720H615"/>
<path d="M655 720H772"/>
<path d="M1072 720H1243"/>
<path d="M1263 720H1287"/>
</g>
<g stroke="#424086" stroke-width="4.0">
<path d="M595.9 703H733"/>
<path d="M1090.9 703H1120"/>
<path d="M1199.1 703H1223"/>
<path d="M1273 703H1326.1"/>
</g>
<g stroke="#482475" stroke-width="4.0">
<path d="M1110.9 687H1135"/>
</g>
<g stroke="#d0d0d0" stroke-opacity="0.38" stroke-width="2.08" stroke-dasharray="2.08 3.44">
<path d="M74.2 842.3V641.5"/>
<path d="M218 842.3V641.5"/>
<path d="M365 842.3V641.5"/>
<path d="M505 842.3V641.5"/>
<path d="M650 842.3V641.5"/>
<path d="M797 842.3V641.5"/>
<path d="M940 842.3V641.5"/>
<path d="M1091 842.3V641.5"/>
<path d="M1239 842.3V641.5"/>
<path d="M1394 842.3V641.5"/>
<path d="M1548 842.3V641.5"/>
<path d="M1687 842.3V641.5"/>
</g>
<g stroke="#fff" stroke-width="2.08">
<path d="M112.63 834h8.33M116.8 829.84v8.33"/>
<path d="M240.64 834h8.33M244.8 829.84v8.33"/>
<path d="M510.83 834h8.33M515 829.84v8.33"/>
<path d="M706.63 834h8.33M710.8 829.84v8.33"/>
<path d="M832.54 834h8.33M836.7 829.84v8.33"/>
<path d="M961.74 834h8.33M965.9 829.84v8.33"/>
<path d="M985.63 834h8.33M989.8 829.84v8.33"/>
<path d="M1115.63 834h8.33M1119.8 829.84v8.33"/>
<path d="M1294.74 834h8.33M1298.9 829.84v8.33"/>
<path d="M1341.74 834h8.33M1345.9 829.84v8.33"/>
<path d="M1412.84 834h8.33M1417 829.84v8.33"/>
<path d="M1481.74 834h8.33M1485.9 829.84v8.33"/>
<path d="M1530.63 834h8.33M1534.8 829.84v8.33"/>
<path d="M1731.63 834h8.33M1735.8 829.84v8.33"/>
<path d="M1765.63 834h8.33M1769.8 829.84v8.33"/>
<path d="M171.64 818h8.33M175.8 813.84v8.33"/>
<path d="M255.84 818h8.33M260 813.84v8.33"/>
<path d="M322.73 818h8.33M326.9 813.84v8.33"/>
<path d="M436.73 818h8.33M440.9 813.84v8.33"/>
<path d="M598.84 818h8.33M603 813.84v8.33"/>
<path d="M716.63 818h8.33M720.8 813.84v8.33"/>
<path d="M792.74 818h8.33M796.9 813.84v8.33"/>
<path d="M938.84 818h8.33M943 813.84v8.33"/>
<path d="M1005.84 818h8.33M1010 813.84v8.33"/>
<path d="M1152.74 818h8.33M1156.9 813.84v8.33"/>
<path d="M1250.84 818h8.33M1255 813.84v8.33"/>
<path d="M1299.74 818h8.33M1303.9 813.84v8.33"/>
<path d="M1348.63 818h8.33M1352.8 813.84v8.33"/>
<path d="M1402.74 818h8.33M1406.9 813.84v8.33"/>
<path d="M1466.74 818h8.33M1470.9 813.84v8.33"/>
<path d="M1554.74 818h8.33M1558.9 813.84v8.33"/>
<path d="M173.53 802h8.33M177.7 797.84v8.33"/>
<path d="M377.83 802h8.33M382 797.84v8.33"/>
<path d="M544.74 802h8.33M548.9 797.84v8.33"/>
<path d="M681.74 802h8.33M685.9 797.84v8.33"/>
<path d="M740.84 802h8.33M745 797.84v8.33"/>
<path d="M1074.74 802h8.33M1078.9 797.84v8.33"/>
<path d="M1216.74 802h8.33M1220.9 797.84v8.33"/>
<path d="M1304.74 802h8.33M1308.9 797.84v8.33"/>
<path d="M1466.74 802h8.33M1470.9 797.84v8.33"/>
<path d="M1559.74 802h8.33M1563.9 797.84v8.33"/>
<path d="M201.74 785h8.33M205.9 780.84v8.33"/>
<path d="M399.73 785h8.33M403.9 780.84v8.33"/>
<path d="M524.74 785h8.33M528.9 780.84v8.33"/>
<path d="M638.63 785h8.33M642.8 780.84v8.33"/>
<path d="M814.74 785h8.33M818.9 780.84v8.33"/>
<path d="M958.84 785h8.33M963 780.84v8.33"/>
<path d="M1039.74 785h8.33M1043.9 780.84v8.33"/>
<path d="M1187.74 785h8.33M1191.9 780.84v8.33"/>
<path d="M1250.84 785h8.33M1255 780.84v8.33"/>
<path d="M1324.74 785h8.33M1328.9 780.84v8.33"/>
<path d="M1402.74 785h8.33M1406.9 780.84v8.33"/>
<path d="M1545.63 785h8.33M1549.8 780.84v8.33"/>
<path d="M355.63 769h8.33M359.8 764.84v8.33"/>
<path d="M425.63 769h8.33M429.8 764.84v8.33"/>
<path d="M475.83 769h8.33M480 764.84v8.33"/>
<path d="M534.74 769h8.33M538.9 764.84v8.33"/>
<path d="M570.84 769h8.33M575 764.84v8.33"/>
<path d="M630.84 769h8.33M635 764.84v8.33"/>
<path d="M973.63 769h8.33M977.8 764.84v8.33"/>
<path d="M1069.74 769h8.33M1073.9 764.84v8.33"/>
<path d="M1108.63 769h8.33M1112.8 764.84v8.33"/>
<path d="M1177.74 769h8.33M1181.9 764.84v8.33"/>
<path d="M1255.63 769h8.33M1259.8 764.84v8.33"/>
<path d="M1466.74 769h8.33M1470.9 764.84v8.33"/>
<path d="M426.63 752h8.33M430.8 747.84v8.33"/>
<path d="M539.74 752h8.33M543.9 747.84v8.33"/>
<path d="M573.63 752h8.33M577.8 747.84v8.33"/>
<path d="M703.84 752h8.33M708 747.84v8.33"/>
<path d="M1093.63 752h8.33M1097.8 747.84v8.33"/>
<path d="M1270.63 752h8.33M1274.8 747.84v8.33"/>
<path d="M1476.74 752h8.33M1480.9 747.84v8.33"/>
<path d="M436.63 736h8.33M440.8 731.84v8.33"/>
<path d="M630.63 736h8.33M634.8 731.84v8.33"/>
<path d="M1038.63 736h8.33M1042.8 731.84v8.33"/>
<path d="M1167.74 736h8.33M1171.9 731.84v8.33"/>
<path d="M1274.74 736h8.33M1278.9 731.84v8.33"/>
<path d="M1496.74 736h8.33M1500.9 731.84v8.33"/>
<path d="M598.63 720h8.33M602.8 715.84v8.33"/>
<path d="M726.74 720h8.33M730.9 715.84v8.33"/>
<path d="M1187.74 720h8.33M1191.9 715.84v8.33"/>
<path d="M1270.63 720h8.33M1274.8 715.84v8.33"/>
<path d="M686.74 703h8.33M690.9 698.84v8.33"/>
<path d="M1101.74 703h8.33M1105.9 698.84v8.33"/>
<path d="M1206.63 703h8.33M1210.8 698.84v8.33"/>
<path d="M1299.74 703h8.33M1303.9 698.84v8.33"/>
<path d="M1118.63 687h8.33M1122.8 682.84v8.33"/>
</g>
<g fill="#fff" font-family="Liberation Sans, sans-serif" font-size="10.6" text-anchor="middle">
<text x="117.25" y="832" textLength="19.99" lengthAdjust="spacingAndGlyphs">KSE</text>
<text x="254.75" y="832" textLength="19.23" lengthAdjust="spacingAndGlyphs">ETA</text>
<text x="494.75" y="832" textLength="22.17" lengthAdjust="spacingAndGlyphs">NZC</text>
<text x="710.85" y="832" textLength="22.72" lengthAdjust="spacingAndGlyphs">NDA</text>
<text x="852.85" y="832" textLength="19.45" lengthAdjust="spacingAndGlyphs">SPE</text>
<text x="945.5" y="832" textLength="22.35" lengthAdjust="spacingAndGlyphs">ARD</text>
<text x="1024.75" y="832" textLength="21.2" lengthAdjust="spacingAndGlyphs">EGE</text>
<text x="1142.5" y="832" textLength="20.44" lengthAdjust="spacingAndGlyphs">NTA</text>
<text x="1283.95" y="832" textLength="24.94" lengthAdjust="spacingAndGlyphs">MON</text>
<text x="1343.35" y="832" textLength="21.44" lengthAdjust="spacingAndGlyphs">URS</text>
<text x="1411.9" y="832" textLength="21.29" lengthAdjust="spacingAndGlyphs">AHY</text>
<text x="1485.55" y="832" textLength="24.65" lengthAdjust="spacingAndGlyphs">GUM</text>
<text x="1535.7" y="832" textLength="22.36" lengthAdjust="spacingAndGlyphs">OHY</text>
<text x="1736.05" y="832" textLength="21.52" lengthAdjust="spacingAndGlyphs">XHE</text>
<text x="1769.6" y="832" textLength="16.75" lengthAdjust="spacingAndGlyphs">EVI</text>
<text x="175.55" y="815" textLength="20.7" lengthAdjust="spacingAndGlyphs">AVB</text>
<text x="254.8" y="815" textLength="17.34" lengthAdjust="spacingAndGlyphs">ELY</text>
<text x="323.85" y="815" textLength="23.35" lengthAdjust="spacingAndGlyphs">CAM</text>
<text x="431.65" y="815" textLength="21.26" lengthAdjust="spacingAndGlyphs">SSG</text>
<text x="578.7" y="815" textLength="20.65" lengthAdjust="spacingAndGlyphs">PCA</text>
<text x="720.75" y="815" textLength="22.73" lengthAdjust="spacingAndGlyphs">AUD</text>
<text x="808.15" y="815" textLength="21.95" lengthAdjust="spacingAndGlyphs">AUR</text>
<text x="930.9" y="815" textLength="21.73" lengthAdjust="spacingAndGlyphs">DSX</text>
<text x="1009.75" y="815" textLength="23.06" lengthAdjust="spacingAndGlyphs">OCU</text>
<text x="1137.15" y="815" textLength="21.98" lengthAdjust="spacingAndGlyphs">OER</text>
<text x="1254.75" y="815" textLength="22.84" lengthAdjust="spacingAndGlyphs">DKD</text>
<text x="1304.15" y="815" textLength="21.72" lengthAdjust="spacingAndGlyphs">DSV</text>
<text x="1353.1" y="815" textLength="17.88" lengthAdjust="spacingAndGlyphs">ALY</text>
<text x="1407.5" y="815" textLength="15.43" lengthAdjust="spacingAndGlyphs">JLE</text>
<text x="1471.85" y="815" textLength="21.13" lengthAdjust="spacingAndGlyphs">SCC</text>
<text x="1559.2" y="815" textLength="19.67" lengthAdjust="spacingAndGlyphs">FEV</text>
<text x="176.1" y="799" textLength="17.99" lengthAdjust="spacingAndGlyphs">LYR</text>
<text x="372.65" y="799" textLength="19.3" lengthAdjust="spacingAndGlyphs">JMC</text>
<text x="558.8" y="799" textLength="15.91" lengthAdjust="spacingAndGlyphs">JPE</text>
<text x="671.5" y="799" textLength="20.33" lengthAdjust="spacingAndGlyphs">PAU</text>
<text x="774.25" y="799" textLength="17.96" lengthAdjust="spacingAndGlyphs">NIA</text>
<text x="1049.75" y="799" textLength="19.26" lengthAdjust="spacingAndGlyphs">STA</text>
<text x="1205.6" y="799" textLength="24.15" lengthAdjust="spacingAndGlyphs">NOO</text>
<text x="1353.3" y="799" textLength="24.42" lengthAdjust="spacingAndGlyphs">COM</text>
<text x="1470.5" y="799" textLength="22.3" lengthAdjust="spacingAndGlyphs">NCC</text>
<text x="1563.5" y="799" textLength="20.56" lengthAdjust="spacingAndGlyphs">FED</text>
<text x="205" y="783" textLength="18" lengthAdjust="spacingAndGlyphs">HVI</text>
<text x="411.9" y="783" textLength="17.41" lengthAdjust="spacingAndGlyphs">ARI</text>
<text x="529.85" y="783" textLength="20.99" lengthAdjust="spacingAndGlyphs">SZC</text>
<text x="617.65" y="783" textLength="20.65" lengthAdjust="spacingAndGlyphs">CAP</text>
<text x="818.35" y="783" textLength="21.96" lengthAdjust="spacingAndGlyphs">NUE</text>
<text x="961.15" y="783" textLength="21.8" lengthAdjust="spacingAndGlyphs">OCT</text>
<text x="1059.3" y="783" textLength="18.48" lengthAdjust="spacingAndGlyphs">ORI</text>
<text x="1186.25" y="783" textLength="24.27" lengthAdjust="spacingAndGlyphs">AMO</text>
<text x="1255.25" y="783" textLength="21.54" lengthAdjust="spacingAndGlyphs">DPC</text>
<text x="1329.15" y="783" textLength="17.31" lengthAdjust="spacingAndGlyphs">XVI</text>
<text x="1407.75" y="783" textLength="22.91" lengthAdjust="spacingAndGlyphs">QUA</text>
<text x="1559.5" y="783" textLength="22.3" lengthAdjust="spacingAndGlyphs">AAN</text>
<text x="353.5" y="766" textLength="20.48" lengthAdjust="spacingAndGlyphs">TAH</text>
<text x="431.35" y="766" textLength="16.75" lengthAdjust="spacingAndGlyphs">JEA</text>
<text x="480" y="766" textLength="12.41" lengthAdjust="spacingAndGlyphs">JIP</text>
<text x="538.85" y="766" textLength="19.15" lengthAdjust="spacingAndGlyphs">PPS</text>
<text x="578.75" y="766" textLength="20.99" lengthAdjust="spacingAndGlyphs">ZCS</text>
<text x="632.75" y="766" textLength="23.29" lengthAdjust="spacingAndGlyphs">GDR</text>
<text x="970.15" y="766" textLength="21.93" lengthAdjust="spacingAndGlyphs">DRA</text>
<text x="1073.35" y="766" textLength="21.86" lengthAdjust="spacingAndGlyphs">LUM</text>
<text x="1112.9" y="766" textLength="21.11" lengthAdjust="spacingAndGlyphs">RPU</text>
<text x="1176.4" y="766" textLength="21.29" lengthAdjust="spacingAndGlyphs">THA</text>
<text x="1259.35" y="766" textLength="20.49" lengthAdjust="spacingAndGlyphs">PSU</text>
<text x="1470.8" y="766" textLength="20.77" lengthAdjust="spacingAndGlyphs">XCB</text>
<text x="431.65" y="750" textLength="17.04" lengthAdjust="spacingAndGlyphs">JRC</text>
<text x="544.3" y="750" textLength="22.16" lengthAdjust="spacingAndGlyphs">CAN</text>
<text x="577.9" y="750" textLength="19.92" lengthAdjust="spacingAndGlyphs">FAN</text>
<text x="681.25" y="750" textLength="20.07" lengthAdjust="spacingAndGlyphs">PER</text>
<text x="1048.95" y="750" textLength="19.92" lengthAdjust="spacingAndGlyphs">CTA</text>
<text x="1264.5" y="750" textLength="22.18" lengthAdjust="spacingAndGlyphs">HYD</text>
<text x="1481.1" y="750" textLength="23.71" lengthAdjust="spacingAndGlyphs">XUM</text>
<text x="441.65" y="733" textLength="22.68" lengthAdjust="spacingAndGlyphs">COR</text>
<text x="656.9" y="733" textLength="21.54" lengthAdjust="spacingAndGlyphs">SDA</text>
<text x="1048.9" y="733" textLength="17.83" lengthAdjust="spacingAndGlyphs">LMI</text>
<text x="1166.5" y="733" textLength="20.55" lengthAdjust="spacingAndGlyphs">LEO</text>
<text x="1274.85" y="733" textLength="20.75" lengthAdjust="spacingAndGlyphs">EHY</text>
<text x="1499.85" y="733" textLength="20.95" lengthAdjust="spacingAndGlyphs">ECV</text>
<text x="602.7" y="717" textLength="17.31" lengthAdjust="spacingAndGlyphs">JXA</text>
<text x="714.85" y="717" textLength="21.57" lengthAdjust="spacingAndGlyphs">KCG</text>
<text x="1156.75" y="717" textLength="22.9" lengthAdjust="spacingAndGlyphs">AND</text>
<text x="1274.55" y="717" textLength="22.95" lengthAdjust="spacingAndGlyphs">DAD</text>
<text x="666.25" y="701" textLength="16.87" lengthAdjust="spacingAndGlyphs">ERI</text>
<text x="1108.5" y="701" textLength="20.4" lengthAdjust="spacingAndGlyphs">SLD</text>
<text x="1211.15" y="701" textLength="22.01" lengthAdjust="spacingAndGlyphs">ORS</text>
<text x="1299.15" y="701" textLength="23.6" lengthAdjust="spacingAndGlyphs">GEM</text>
<text x="1122.75" y="684" textLength="23.13" lengthAdjust="spacingAndGlyphs">KUM</text>
</g>
<rect x="19.5" y="641.5" width="1766" height="200.8" fill="none" stroke="#fff" stroke-width="1.11"/>
<g stroke="#fff" stroke-width="1.11">
<path d="M19.5 842.3v4.86"/>
<path d="M264.78 842.3v4.86"/>
<path d="M510.06 842.3v4.86"/>
<path d="M755.33 842.3v4.86"/>
<path d="M1000.61 842.3v4.86"/>
<path d="M1245.89 842.3v4.86"/>
<path d="M1491.17 842.3v4.86"/>
<path d="M1736.44 842.3v4.86"/>
</g>
<g fill="#fff" font-family="Liberation Sans, sans-serif" font-size="14.4" text-anchor="middle">
<text x="19.5" y="862" textLength="7.84" lengthAdjust="spacingAndGlyphs">0</text>
<text x="264.78" y="862" textLength="16.69" lengthAdjust="spacingAndGlyphs">50</text>
<text x="510.06" y="862" textLength="25.53" lengthAdjust="spacingAndGlyphs">100</text>
<text x="755.33" y="862" textLength="25.53" lengthAdjust="spacingAndGlyphs">150</text>
<text x="1000.61" y="862" textLength="25.53" lengthAdjust="spacingAndGlyphs">200</text>
<text x="1245.89" y="862" textLength="25.53" lengthAdjust="spacingAndGlyphs">250</text>
<text x="1491.17" y="862" textLength="25.53" lengthAdjust="spacingAndGlyphs">300</text>
<text x="1736.44" y="862" textLength="25.53" lengthAdjust="spacingAndGlyphs">350</text>
<text x="902.4" y="882" textLength="146.8" lengthAdjust="spacingAndGlyphs">Solar longitude (deg)</text>
</g>
</svg></body></html>
